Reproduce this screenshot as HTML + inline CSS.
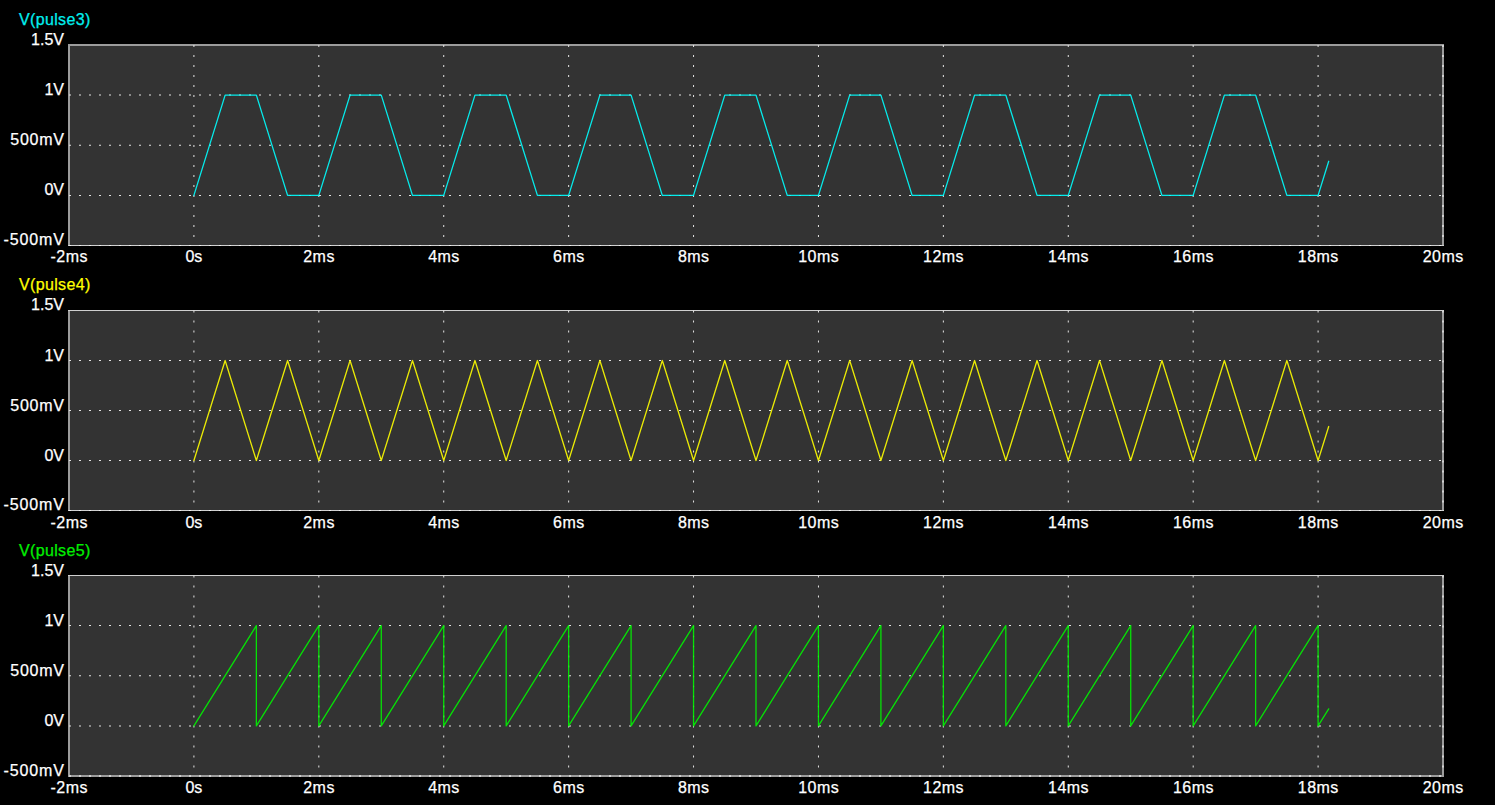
<!DOCTYPE html><html><head><meta charset="utf-8"><style>html,body{margin:0;padding:0;background:#000;width:1495px;height:805px;overflow:hidden}svg{display:block}text{font-family:"Liberation Sans",sans-serif;font-size:16px;stroke-width:0.25px;paint-order:stroke}</style></head><body>
<svg width="1495" height="805" viewBox="0 0 1495 805">
<rect x="0" y="0" width="1495" height="805" fill="#000"/>
<rect x="69.00" y="45.00" width="1374.00" height="200.50" fill="#333333"/>
<rect x="68.00" y="45.00" width="2" height="200.50" fill="#9c9c9c"/>
<rect x="1442.00" y="45.00" width="2" height="200.50" fill="#9c9c9c"/>
<rect x="68.00" y="44.00" width="1376.00" height="2" fill="#9c9c9c"/>
<rect x="68.00" y="245.00" width="1376.00" height="1" fill="#d0d0d0"/>
<path d="M69.00 94.62h2v1h-2zM79.00 94.62h2v1h-2zM89.00 94.62h2v1h-2zM99.00 94.62h2v1h-2zM109.00 94.62h2v1h-2zM119.00 94.62h2v1h-2zM129.00 94.62h2v1h-2zM139.00 94.62h2v1h-2zM149.00 94.62h2v1h-2zM159.00 94.62h2v1h-2zM169.00 94.62h2v1h-2zM179.00 94.62h2v1h-2zM189.00 94.62h2v1h-2zM199.00 94.62h2v1h-2zM209.00 94.62h2v1h-2zM219.00 94.62h2v1h-2zM229.00 94.62h2v1h-2zM239.00 94.62h2v1h-2zM249.00 94.62h2v1h-2zM259.00 94.62h2v1h-2zM269.00 94.62h2v1h-2zM279.00 94.62h2v1h-2zM289.00 94.62h2v1h-2zM299.00 94.62h2v1h-2zM309.00 94.62h2v1h-2zM319.00 94.62h2v1h-2zM329.00 94.62h2v1h-2zM339.00 94.62h2v1h-2zM349.00 94.62h2v1h-2zM359.00 94.62h2v1h-2zM369.00 94.62h2v1h-2zM379.00 94.62h2v1h-2zM389.00 94.62h2v1h-2zM399.00 94.62h2v1h-2zM409.00 94.62h2v1h-2zM419.00 94.62h2v1h-2zM429.00 94.62h2v1h-2zM439.00 94.62h2v1h-2zM449.00 94.62h2v1h-2zM459.00 94.62h2v1h-2zM469.00 94.62h2v1h-2zM479.00 94.62h2v1h-2zM489.00 94.62h2v1h-2zM499.00 94.62h2v1h-2zM509.00 94.62h2v1h-2zM519.00 94.62h2v1h-2zM529.00 94.62h2v1h-2zM539.00 94.62h2v1h-2zM549.00 94.62h2v1h-2zM559.00 94.62h2v1h-2zM569.00 94.62h2v1h-2zM579.00 94.62h2v1h-2zM589.00 94.62h2v1h-2zM599.00 94.62h2v1h-2zM609.00 94.62h2v1h-2zM619.00 94.62h2v1h-2zM629.00 94.62h2v1h-2zM639.00 94.62h2v1h-2zM649.00 94.62h2v1h-2zM659.00 94.62h2v1h-2zM669.00 94.62h2v1h-2zM679.00 94.62h2v1h-2zM689.00 94.62h2v1h-2zM699.00 94.62h2v1h-2zM709.00 94.62h2v1h-2zM719.00 94.62h2v1h-2zM729.00 94.62h2v1h-2zM739.00 94.62h2v1h-2zM749.00 94.62h2v1h-2zM759.00 94.62h2v1h-2zM769.00 94.62h2v1h-2zM779.00 94.62h2v1h-2zM789.00 94.62h2v1h-2zM799.00 94.62h2v1h-2zM809.00 94.62h2v1h-2zM819.00 94.62h2v1h-2zM829.00 94.62h2v1h-2zM839.00 94.62h2v1h-2zM849.00 94.62h2v1h-2zM859.00 94.62h2v1h-2zM869.00 94.62h2v1h-2zM879.00 94.62h2v1h-2zM889.00 94.62h2v1h-2zM899.00 94.62h2v1h-2zM909.00 94.62h2v1h-2zM919.00 94.62h2v1h-2zM929.00 94.62h2v1h-2zM939.00 94.62h2v1h-2zM949.00 94.62h2v1h-2zM959.00 94.62h2v1h-2zM969.00 94.62h2v1h-2zM979.00 94.62h2v1h-2zM989.00 94.62h2v1h-2zM999.00 94.62h2v1h-2zM1009.00 94.62h2v1h-2zM1019.00 94.62h2v1h-2zM1029.00 94.62h2v1h-2zM1039.00 94.62h2v1h-2zM1049.00 94.62h2v1h-2zM1059.00 94.62h2v1h-2zM1069.00 94.62h2v1h-2zM1079.00 94.62h2v1h-2zM1089.00 94.62h2v1h-2zM1099.00 94.62h2v1h-2zM1109.00 94.62h2v1h-2zM1119.00 94.62h2v1h-2zM1129.00 94.62h2v1h-2zM1139.00 94.62h2v1h-2zM1149.00 94.62h2v1h-2zM1159.00 94.62h2v1h-2zM1169.00 94.62h2v1h-2zM1179.00 94.62h2v1h-2zM1189.00 94.62h2v1h-2zM1199.00 94.62h2v1h-2zM1209.00 94.62h2v1h-2zM1219.00 94.62h2v1h-2zM1229.00 94.62h2v1h-2zM1239.00 94.62h2v1h-2zM1249.00 94.62h2v1h-2zM1259.00 94.62h2v1h-2zM1269.00 94.62h2v1h-2zM1279.00 94.62h2v1h-2zM1289.00 94.62h2v1h-2zM1299.00 94.62h2v1h-2zM1309.00 94.62h2v1h-2zM1319.00 94.62h2v1h-2zM1329.00 94.62h2v1h-2zM1339.00 94.62h2v1h-2zM1349.00 94.62h2v1h-2zM1359.00 94.62h2v1h-2zM1369.00 94.62h2v1h-2zM1379.00 94.62h2v1h-2zM1389.00 94.62h2v1h-2zM1399.00 94.62h2v1h-2zM1409.00 94.62h2v1h-2zM1419.00 94.62h2v1h-2zM1429.00 94.62h2v1h-2zM1439.00 94.62h2v1h-2zM69.00 144.75h2v1h-2zM79.00 144.75h2v1h-2zM89.00 144.75h2v1h-2zM99.00 144.75h2v1h-2zM109.00 144.75h2v1h-2zM119.00 144.75h2v1h-2zM129.00 144.75h2v1h-2zM139.00 144.75h2v1h-2zM149.00 144.75h2v1h-2zM159.00 144.75h2v1h-2zM169.00 144.75h2v1h-2zM179.00 144.75h2v1h-2zM189.00 144.75h2v1h-2zM199.00 144.75h2v1h-2zM209.00 144.75h2v1h-2zM219.00 144.75h2v1h-2zM229.00 144.75h2v1h-2zM239.00 144.75h2v1h-2zM249.00 144.75h2v1h-2zM259.00 144.75h2v1h-2zM269.00 144.75h2v1h-2zM279.00 144.75h2v1h-2zM289.00 144.75h2v1h-2zM299.00 144.75h2v1h-2zM309.00 144.75h2v1h-2zM319.00 144.75h2v1h-2zM329.00 144.75h2v1h-2zM339.00 144.75h2v1h-2zM349.00 144.75h2v1h-2zM359.00 144.75h2v1h-2zM369.00 144.75h2v1h-2zM379.00 144.75h2v1h-2zM389.00 144.75h2v1h-2zM399.00 144.75h2v1h-2zM409.00 144.75h2v1h-2zM419.00 144.75h2v1h-2zM429.00 144.75h2v1h-2zM439.00 144.75h2v1h-2zM449.00 144.75h2v1h-2zM459.00 144.75h2v1h-2zM469.00 144.75h2v1h-2zM479.00 144.75h2v1h-2zM489.00 144.75h2v1h-2zM499.00 144.75h2v1h-2zM509.00 144.75h2v1h-2zM519.00 144.75h2v1h-2zM529.00 144.75h2v1h-2zM539.00 144.75h2v1h-2zM549.00 144.75h2v1h-2zM559.00 144.75h2v1h-2zM569.00 144.75h2v1h-2zM579.00 144.75h2v1h-2zM589.00 144.75h2v1h-2zM599.00 144.75h2v1h-2zM609.00 144.75h2v1h-2zM619.00 144.75h2v1h-2zM629.00 144.75h2v1h-2zM639.00 144.75h2v1h-2zM649.00 144.75h2v1h-2zM659.00 144.75h2v1h-2zM669.00 144.75h2v1h-2zM679.00 144.75h2v1h-2zM689.00 144.75h2v1h-2zM699.00 144.75h2v1h-2zM709.00 144.75h2v1h-2zM719.00 144.75h2v1h-2zM729.00 144.75h2v1h-2zM739.00 144.75h2v1h-2zM749.00 144.75h2v1h-2zM759.00 144.75h2v1h-2zM769.00 144.75h2v1h-2zM779.00 144.75h2v1h-2zM789.00 144.75h2v1h-2zM799.00 144.75h2v1h-2zM809.00 144.75h2v1h-2zM819.00 144.75h2v1h-2zM829.00 144.75h2v1h-2zM839.00 144.75h2v1h-2zM849.00 144.75h2v1h-2zM859.00 144.75h2v1h-2zM869.00 144.75h2v1h-2zM879.00 144.75h2v1h-2zM889.00 144.75h2v1h-2zM899.00 144.75h2v1h-2zM909.00 144.75h2v1h-2zM919.00 144.75h2v1h-2zM929.00 144.75h2v1h-2zM939.00 144.75h2v1h-2zM949.00 144.75h2v1h-2zM959.00 144.75h2v1h-2zM969.00 144.75h2v1h-2zM979.00 144.75h2v1h-2zM989.00 144.75h2v1h-2zM999.00 144.75h2v1h-2zM1009.00 144.75h2v1h-2zM1019.00 144.75h2v1h-2zM1029.00 144.75h2v1h-2zM1039.00 144.75h2v1h-2zM1049.00 144.75h2v1h-2zM1059.00 144.75h2v1h-2zM1069.00 144.75h2v1h-2zM1079.00 144.75h2v1h-2zM1089.00 144.75h2v1h-2zM1099.00 144.75h2v1h-2zM1109.00 144.75h2v1h-2zM1119.00 144.75h2v1h-2zM1129.00 144.75h2v1h-2zM1139.00 144.75h2v1h-2zM1149.00 144.75h2v1h-2zM1159.00 144.75h2v1h-2zM1169.00 144.75h2v1h-2zM1179.00 144.75h2v1h-2zM1189.00 144.75h2v1h-2zM1199.00 144.75h2v1h-2zM1209.00 144.75h2v1h-2zM1219.00 144.75h2v1h-2zM1229.00 144.75h2v1h-2zM1239.00 144.75h2v1h-2zM1249.00 144.75h2v1h-2zM1259.00 144.75h2v1h-2zM1269.00 144.75h2v1h-2zM1279.00 144.75h2v1h-2zM1289.00 144.75h2v1h-2zM1299.00 144.75h2v1h-2zM1309.00 144.75h2v1h-2zM1319.00 144.75h2v1h-2zM1329.00 144.75h2v1h-2zM1339.00 144.75h2v1h-2zM1349.00 144.75h2v1h-2zM1359.00 144.75h2v1h-2zM1369.00 144.75h2v1h-2zM1379.00 144.75h2v1h-2zM1389.00 144.75h2v1h-2zM1399.00 144.75h2v1h-2zM1409.00 144.75h2v1h-2zM1419.00 144.75h2v1h-2zM1429.00 144.75h2v1h-2zM1439.00 144.75h2v1h-2zM69.00 194.88h2v1h-2zM79.00 194.88h2v1h-2zM89.00 194.88h2v1h-2zM99.00 194.88h2v1h-2zM109.00 194.88h2v1h-2zM119.00 194.88h2v1h-2zM129.00 194.88h2v1h-2zM139.00 194.88h2v1h-2zM149.00 194.88h2v1h-2zM159.00 194.88h2v1h-2zM169.00 194.88h2v1h-2zM179.00 194.88h2v1h-2zM189.00 194.88h2v1h-2zM199.00 194.88h2v1h-2zM209.00 194.88h2v1h-2zM219.00 194.88h2v1h-2zM229.00 194.88h2v1h-2zM239.00 194.88h2v1h-2zM249.00 194.88h2v1h-2zM259.00 194.88h2v1h-2zM269.00 194.88h2v1h-2zM279.00 194.88h2v1h-2zM289.00 194.88h2v1h-2zM299.00 194.88h2v1h-2zM309.00 194.88h2v1h-2zM319.00 194.88h2v1h-2zM329.00 194.88h2v1h-2zM339.00 194.88h2v1h-2zM349.00 194.88h2v1h-2zM359.00 194.88h2v1h-2zM369.00 194.88h2v1h-2zM379.00 194.88h2v1h-2zM389.00 194.88h2v1h-2zM399.00 194.88h2v1h-2zM409.00 194.88h2v1h-2zM419.00 194.88h2v1h-2zM429.00 194.88h2v1h-2zM439.00 194.88h2v1h-2zM449.00 194.88h2v1h-2zM459.00 194.88h2v1h-2zM469.00 194.88h2v1h-2zM479.00 194.88h2v1h-2zM489.00 194.88h2v1h-2zM499.00 194.88h2v1h-2zM509.00 194.88h2v1h-2zM519.00 194.88h2v1h-2zM529.00 194.88h2v1h-2zM539.00 194.88h2v1h-2zM549.00 194.88h2v1h-2zM559.00 194.88h2v1h-2zM569.00 194.88h2v1h-2zM579.00 194.88h2v1h-2zM589.00 194.88h2v1h-2zM599.00 194.88h2v1h-2zM609.00 194.88h2v1h-2zM619.00 194.88h2v1h-2zM629.00 194.88h2v1h-2zM639.00 194.88h2v1h-2zM649.00 194.88h2v1h-2zM659.00 194.88h2v1h-2zM669.00 194.88h2v1h-2zM679.00 194.88h2v1h-2zM689.00 194.88h2v1h-2zM699.00 194.88h2v1h-2zM709.00 194.88h2v1h-2zM719.00 194.88h2v1h-2zM729.00 194.88h2v1h-2zM739.00 194.88h2v1h-2zM749.00 194.88h2v1h-2zM759.00 194.88h2v1h-2zM769.00 194.88h2v1h-2zM779.00 194.88h2v1h-2zM789.00 194.88h2v1h-2zM799.00 194.88h2v1h-2zM809.00 194.88h2v1h-2zM819.00 194.88h2v1h-2zM829.00 194.88h2v1h-2zM839.00 194.88h2v1h-2zM849.00 194.88h2v1h-2zM859.00 194.88h2v1h-2zM869.00 194.88h2v1h-2zM879.00 194.88h2v1h-2zM889.00 194.88h2v1h-2zM899.00 194.88h2v1h-2zM909.00 194.88h2v1h-2zM919.00 194.88h2v1h-2zM929.00 194.88h2v1h-2zM939.00 194.88h2v1h-2zM949.00 194.88h2v1h-2zM959.00 194.88h2v1h-2zM969.00 194.88h2v1h-2zM979.00 194.88h2v1h-2zM989.00 194.88h2v1h-2zM999.00 194.88h2v1h-2zM1009.00 194.88h2v1h-2zM1019.00 194.88h2v1h-2zM1029.00 194.88h2v1h-2zM1039.00 194.88h2v1h-2zM1049.00 194.88h2v1h-2zM1059.00 194.88h2v1h-2zM1069.00 194.88h2v1h-2zM1079.00 194.88h2v1h-2zM1089.00 194.88h2v1h-2zM1099.00 194.88h2v1h-2zM1109.00 194.88h2v1h-2zM1119.00 194.88h2v1h-2zM1129.00 194.88h2v1h-2zM1139.00 194.88h2v1h-2zM1149.00 194.88h2v1h-2zM1159.00 194.88h2v1h-2zM1169.00 194.88h2v1h-2zM1179.00 194.88h2v1h-2zM1189.00 194.88h2v1h-2zM1199.00 194.88h2v1h-2zM1209.00 194.88h2v1h-2zM1219.00 194.88h2v1h-2zM1229.00 194.88h2v1h-2zM1239.00 194.88h2v1h-2zM1249.00 194.88h2v1h-2zM1259.00 194.88h2v1h-2zM1269.00 194.88h2v1h-2zM1279.00 194.88h2v1h-2zM1289.00 194.88h2v1h-2zM1299.00 194.88h2v1h-2zM1309.00 194.88h2v1h-2zM1319.00 194.88h2v1h-2zM1329.00 194.88h2v1h-2zM1339.00 194.88h2v1h-2zM1349.00 194.88h2v1h-2zM1359.00 194.88h2v1h-2zM1369.00 194.88h2v1h-2zM1379.00 194.88h2v1h-2zM1389.00 194.88h2v1h-2zM1399.00 194.88h2v1h-2zM1409.00 194.88h2v1h-2zM1419.00 194.88h2v1h-2zM1429.00 194.88h2v1h-2zM1439.00 194.88h2v1h-2zM193.41 45.00h1v2h-1zM193.41 55.00h1v2h-1zM193.41 65.00h1v2h-1zM193.41 75.00h1v2h-1zM193.41 85.00h1v2h-1zM193.41 95.00h1v2h-1zM193.41 105.00h1v2h-1zM193.41 115.00h1v2h-1zM193.41 125.00h1v2h-1zM193.41 135.00h1v2h-1zM193.41 145.00h1v2h-1zM193.41 155.00h1v2h-1zM193.41 165.00h1v2h-1zM193.41 175.00h1v2h-1zM193.41 185.00h1v2h-1zM193.41 195.00h1v2h-1zM193.41 205.00h1v2h-1zM193.41 215.00h1v2h-1zM193.41 225.00h1v2h-1zM193.41 235.00h1v2h-1zM318.32 45.00h1v2h-1zM318.32 55.00h1v2h-1zM318.32 65.00h1v2h-1zM318.32 75.00h1v2h-1zM318.32 85.00h1v2h-1zM318.32 95.00h1v2h-1zM318.32 105.00h1v2h-1zM318.32 115.00h1v2h-1zM318.32 125.00h1v2h-1zM318.32 135.00h1v2h-1zM318.32 145.00h1v2h-1zM318.32 155.00h1v2h-1zM318.32 165.00h1v2h-1zM318.32 175.00h1v2h-1zM318.32 185.00h1v2h-1zM318.32 195.00h1v2h-1zM318.32 205.00h1v2h-1zM318.32 215.00h1v2h-1zM318.32 225.00h1v2h-1zM318.32 235.00h1v2h-1zM443.23 45.00h1v2h-1zM443.23 55.00h1v2h-1zM443.23 65.00h1v2h-1zM443.23 75.00h1v2h-1zM443.23 85.00h1v2h-1zM443.23 95.00h1v2h-1zM443.23 105.00h1v2h-1zM443.23 115.00h1v2h-1zM443.23 125.00h1v2h-1zM443.23 135.00h1v2h-1zM443.23 145.00h1v2h-1zM443.23 155.00h1v2h-1zM443.23 165.00h1v2h-1zM443.23 175.00h1v2h-1zM443.23 185.00h1v2h-1zM443.23 195.00h1v2h-1zM443.23 205.00h1v2h-1zM443.23 215.00h1v2h-1zM443.23 225.00h1v2h-1zM443.23 235.00h1v2h-1zM568.14 45.00h1v2h-1zM568.14 55.00h1v2h-1zM568.14 65.00h1v2h-1zM568.14 75.00h1v2h-1zM568.14 85.00h1v2h-1zM568.14 95.00h1v2h-1zM568.14 105.00h1v2h-1zM568.14 115.00h1v2h-1zM568.14 125.00h1v2h-1zM568.14 135.00h1v2h-1zM568.14 145.00h1v2h-1zM568.14 155.00h1v2h-1zM568.14 165.00h1v2h-1zM568.14 175.00h1v2h-1zM568.14 185.00h1v2h-1zM568.14 195.00h1v2h-1zM568.14 205.00h1v2h-1zM568.14 215.00h1v2h-1zM568.14 225.00h1v2h-1zM568.14 235.00h1v2h-1zM693.05 45.00h1v2h-1zM693.05 55.00h1v2h-1zM693.05 65.00h1v2h-1zM693.05 75.00h1v2h-1zM693.05 85.00h1v2h-1zM693.05 95.00h1v2h-1zM693.05 105.00h1v2h-1zM693.05 115.00h1v2h-1zM693.05 125.00h1v2h-1zM693.05 135.00h1v2h-1zM693.05 145.00h1v2h-1zM693.05 155.00h1v2h-1zM693.05 165.00h1v2h-1zM693.05 175.00h1v2h-1zM693.05 185.00h1v2h-1zM693.05 195.00h1v2h-1zM693.05 205.00h1v2h-1zM693.05 215.00h1v2h-1zM693.05 225.00h1v2h-1zM693.05 235.00h1v2h-1zM817.95 45.00h1v2h-1zM817.95 55.00h1v2h-1zM817.95 65.00h1v2h-1zM817.95 75.00h1v2h-1zM817.95 85.00h1v2h-1zM817.95 95.00h1v2h-1zM817.95 105.00h1v2h-1zM817.95 115.00h1v2h-1zM817.95 125.00h1v2h-1zM817.95 135.00h1v2h-1zM817.95 145.00h1v2h-1zM817.95 155.00h1v2h-1zM817.95 165.00h1v2h-1zM817.95 175.00h1v2h-1zM817.95 185.00h1v2h-1zM817.95 195.00h1v2h-1zM817.95 205.00h1v2h-1zM817.95 215.00h1v2h-1zM817.95 225.00h1v2h-1zM817.95 235.00h1v2h-1zM942.86 45.00h1v2h-1zM942.86 55.00h1v2h-1zM942.86 65.00h1v2h-1zM942.86 75.00h1v2h-1zM942.86 85.00h1v2h-1zM942.86 95.00h1v2h-1zM942.86 105.00h1v2h-1zM942.86 115.00h1v2h-1zM942.86 125.00h1v2h-1zM942.86 135.00h1v2h-1zM942.86 145.00h1v2h-1zM942.86 155.00h1v2h-1zM942.86 165.00h1v2h-1zM942.86 175.00h1v2h-1zM942.86 185.00h1v2h-1zM942.86 195.00h1v2h-1zM942.86 205.00h1v2h-1zM942.86 215.00h1v2h-1zM942.86 225.00h1v2h-1zM942.86 235.00h1v2h-1zM1067.77 45.00h1v2h-1zM1067.77 55.00h1v2h-1zM1067.77 65.00h1v2h-1zM1067.77 75.00h1v2h-1zM1067.77 85.00h1v2h-1zM1067.77 95.00h1v2h-1zM1067.77 105.00h1v2h-1zM1067.77 115.00h1v2h-1zM1067.77 125.00h1v2h-1zM1067.77 135.00h1v2h-1zM1067.77 145.00h1v2h-1zM1067.77 155.00h1v2h-1zM1067.77 165.00h1v2h-1zM1067.77 175.00h1v2h-1zM1067.77 185.00h1v2h-1zM1067.77 195.00h1v2h-1zM1067.77 205.00h1v2h-1zM1067.77 215.00h1v2h-1zM1067.77 225.00h1v2h-1zM1067.77 235.00h1v2h-1zM1192.68 45.00h1v2h-1zM1192.68 55.00h1v2h-1zM1192.68 65.00h1v2h-1zM1192.68 75.00h1v2h-1zM1192.68 85.00h1v2h-1zM1192.68 95.00h1v2h-1zM1192.68 105.00h1v2h-1zM1192.68 115.00h1v2h-1zM1192.68 125.00h1v2h-1zM1192.68 135.00h1v2h-1zM1192.68 145.00h1v2h-1zM1192.68 155.00h1v2h-1zM1192.68 165.00h1v2h-1zM1192.68 175.00h1v2h-1zM1192.68 185.00h1v2h-1zM1192.68 195.00h1v2h-1zM1192.68 205.00h1v2h-1zM1192.68 215.00h1v2h-1zM1192.68 225.00h1v2h-1zM1192.68 235.00h1v2h-1zM1317.59 45.00h1v2h-1zM1317.59 55.00h1v2h-1zM1317.59 65.00h1v2h-1zM1317.59 75.00h1v2h-1zM1317.59 85.00h1v2h-1zM1317.59 95.00h1v2h-1zM1317.59 105.00h1v2h-1zM1317.59 115.00h1v2h-1zM1317.59 125.00h1v2h-1zM1317.59 135.00h1v2h-1zM1317.59 145.00h1v2h-1zM1317.59 155.00h1v2h-1zM1317.59 165.00h1v2h-1zM1317.59 175.00h1v2h-1zM1317.59 185.00h1v2h-1zM1317.59 195.00h1v2h-1zM1317.59 205.00h1v2h-1zM1317.59 215.00h1v2h-1zM1317.59 225.00h1v2h-1zM1317.59 235.00h1v2h-1z" fill="#e4e4e4"/>
<path d="M69.00 245.00h2v1.00h-2zM79.00 245.00h2v1.00h-2zM89.00 245.00h2v1.00h-2zM99.00 245.00h2v1.00h-2zM109.00 245.00h2v1.00h-2zM119.00 245.00h2v1.00h-2zM129.00 245.00h2v1.00h-2zM139.00 245.00h2v1.00h-2zM149.00 245.00h2v1.00h-2zM159.00 245.00h2v1.00h-2zM169.00 245.00h2v1.00h-2zM179.00 245.00h2v1.00h-2zM189.00 245.00h2v1.00h-2zM199.00 245.00h2v1.00h-2zM209.00 245.00h2v1.00h-2zM219.00 245.00h2v1.00h-2zM229.00 245.00h2v1.00h-2zM239.00 245.00h2v1.00h-2zM249.00 245.00h2v1.00h-2zM259.00 245.00h2v1.00h-2zM269.00 245.00h2v1.00h-2zM279.00 245.00h2v1.00h-2zM289.00 245.00h2v1.00h-2zM299.00 245.00h2v1.00h-2zM309.00 245.00h2v1.00h-2zM319.00 245.00h2v1.00h-2zM329.00 245.00h2v1.00h-2zM339.00 245.00h2v1.00h-2zM349.00 245.00h2v1.00h-2zM359.00 245.00h2v1.00h-2zM369.00 245.00h2v1.00h-2zM379.00 245.00h2v1.00h-2zM389.00 245.00h2v1.00h-2zM399.00 245.00h2v1.00h-2zM409.00 245.00h2v1.00h-2zM419.00 245.00h2v1.00h-2zM429.00 245.00h2v1.00h-2zM439.00 245.00h2v1.00h-2zM449.00 245.00h2v1.00h-2zM459.00 245.00h2v1.00h-2zM469.00 245.00h2v1.00h-2zM479.00 245.00h2v1.00h-2zM489.00 245.00h2v1.00h-2zM499.00 245.00h2v1.00h-2zM509.00 245.00h2v1.00h-2zM519.00 245.00h2v1.00h-2zM529.00 245.00h2v1.00h-2zM539.00 245.00h2v1.00h-2zM549.00 245.00h2v1.00h-2zM559.00 245.00h2v1.00h-2zM569.00 245.00h2v1.00h-2zM579.00 245.00h2v1.00h-2zM589.00 245.00h2v1.00h-2zM599.00 245.00h2v1.00h-2zM609.00 245.00h2v1.00h-2zM619.00 245.00h2v1.00h-2zM629.00 245.00h2v1.00h-2zM639.00 245.00h2v1.00h-2zM649.00 245.00h2v1.00h-2zM659.00 245.00h2v1.00h-2zM669.00 245.00h2v1.00h-2zM679.00 245.00h2v1.00h-2zM689.00 245.00h2v1.00h-2zM699.00 245.00h2v1.00h-2zM709.00 245.00h2v1.00h-2zM719.00 245.00h2v1.00h-2zM729.00 245.00h2v1.00h-2zM739.00 245.00h2v1.00h-2zM749.00 245.00h2v1.00h-2zM759.00 245.00h2v1.00h-2zM769.00 245.00h2v1.00h-2zM779.00 245.00h2v1.00h-2zM789.00 245.00h2v1.00h-2zM799.00 245.00h2v1.00h-2zM809.00 245.00h2v1.00h-2zM819.00 245.00h2v1.00h-2zM829.00 245.00h2v1.00h-2zM839.00 245.00h2v1.00h-2zM849.00 245.00h2v1.00h-2zM859.00 245.00h2v1.00h-2zM869.00 245.00h2v1.00h-2zM879.00 245.00h2v1.00h-2zM889.00 245.00h2v1.00h-2zM899.00 245.00h2v1.00h-2zM909.00 245.00h2v1.00h-2zM919.00 245.00h2v1.00h-2zM929.00 245.00h2v1.00h-2zM939.00 245.00h2v1.00h-2zM949.00 245.00h2v1.00h-2zM959.00 245.00h2v1.00h-2zM969.00 245.00h2v1.00h-2zM979.00 245.00h2v1.00h-2zM989.00 245.00h2v1.00h-2zM999.00 245.00h2v1.00h-2zM1009.00 245.00h2v1.00h-2zM1019.00 245.00h2v1.00h-2zM1029.00 245.00h2v1.00h-2zM1039.00 245.00h2v1.00h-2zM1049.00 245.00h2v1.00h-2zM1059.00 245.00h2v1.00h-2zM1069.00 245.00h2v1.00h-2zM1079.00 245.00h2v1.00h-2zM1089.00 245.00h2v1.00h-2zM1099.00 245.00h2v1.00h-2zM1109.00 245.00h2v1.00h-2zM1119.00 245.00h2v1.00h-2zM1129.00 245.00h2v1.00h-2zM1139.00 245.00h2v1.00h-2zM1149.00 245.00h2v1.00h-2zM1159.00 245.00h2v1.00h-2zM1169.00 245.00h2v1.00h-2zM1179.00 245.00h2v1.00h-2zM1189.00 245.00h2v1.00h-2zM1199.00 245.00h2v1.00h-2zM1209.00 245.00h2v1.00h-2zM1219.00 245.00h2v1.00h-2zM1229.00 245.00h2v1.00h-2zM1239.00 245.00h2v1.00h-2zM1249.00 245.00h2v1.00h-2zM1259.00 245.00h2v1.00h-2zM1269.00 245.00h2v1.00h-2zM1279.00 245.00h2v1.00h-2zM1289.00 245.00h2v1.00h-2zM1299.00 245.00h2v1.00h-2zM1309.00 245.00h2v1.00h-2zM1319.00 245.00h2v1.00h-2zM1329.00 245.00h2v1.00h-2zM1339.00 245.00h2v1.00h-2zM1349.00 245.00h2v1.00h-2zM1359.00 245.00h2v1.00h-2zM1369.00 245.00h2v1.00h-2zM1379.00 245.00h2v1.00h-2zM1389.00 245.00h2v1.00h-2zM1399.00 245.00h2v1.00h-2zM1409.00 245.00h2v1.00h-2zM1419.00 245.00h2v1.00h-2zM1429.00 245.00h2v1.00h-2zM1439.00 245.00h2v1.00h-2z" fill="#eeeeee"/>
<path d="M1442.00 45.00h2.00v2h-2.00zM1442.00 55.00h2.00v2h-2.00zM1442.00 65.00h2.00v2h-2.00zM1442.00 75.00h2.00v2h-2.00zM1442.00 85.00h2.00v2h-2.00zM1442.00 95.00h2.00v2h-2.00zM1442.00 105.00h2.00v2h-2.00zM1442.00 115.00h2.00v2h-2.00zM1442.00 125.00h2.00v2h-2.00zM1442.00 135.00h2.00v2h-2.00zM1442.00 145.00h2.00v2h-2.00zM1442.00 155.00h2.00v2h-2.00zM1442.00 165.00h2.00v2h-2.00zM1442.00 175.00h2.00v2h-2.00zM1442.00 185.00h2.00v2h-2.00zM1442.00 195.00h2.00v2h-2.00zM1442.00 205.00h2.00v2h-2.00zM1442.00 215.00h2.00v2h-2.00zM1442.00 225.00h2.00v2h-2.00zM1442.00 235.00h2.00v2h-2.00z" fill="#d0d0d0"/>
<path d="M193.91 195.38 L225.14 95.12 L256.36 95.12 L287.59 195.38 L318.82 195.38 L350.05 95.12 L381.27 95.12 L412.50 195.38 L443.73 195.38 L474.95 95.12 L506.18 95.12 L537.41 195.38 L568.64 195.38 L599.86 95.12 L631.09 95.12 L662.32 195.38 L693.55 195.38 L724.77 95.12 L756.00 95.12 L787.23 195.38 L818.45 195.38 L849.68 95.12 L880.91 95.12 L912.14 195.38 L943.36 195.38 L974.59 95.12 L1005.82 95.12 L1037.05 195.38 L1068.27 195.38 L1099.50 95.12 L1130.73 95.12 L1161.95 195.38 L1193.18 195.38 L1224.41 95.12 L1255.64 95.12 L1286.86 195.38 L1318.09 195.38 L1328.71 161.29" fill="none" stroke="#00ffff" stroke-width="1.3" stroke-opacity="0.9" stroke-linejoin="round" stroke-linecap="round"/>
<text x="19" y="25" fill="#00f0f0" stroke="#00f0f0" letter-spacing="0.35">V(pulse3)</text>
<text x="64.00" y="45.00" fill="#ffffff" stroke="#ffffff" text-anchor="end" letter-spacing="0.00">1.5V</text>
<text x="64.00" y="95.12" fill="#ffffff" stroke="#ffffff" text-anchor="end" letter-spacing="0.00">1V</text>
<text x="64.75" y="145.25" fill="#ffffff" stroke="#ffffff" text-anchor="end" letter-spacing="0.75">500mV</text>
<text x="64.00" y="195.38" fill="#ffffff" stroke="#ffffff" text-anchor="end" letter-spacing="0.00">0V</text>
<text x="64.90" y="245.00" fill="#ffffff" stroke="#ffffff" text-anchor="end" letter-spacing="0.90">-500mV</text>
<text x="69.22" y="262" fill="#ffffff" stroke="#ffffff" text-anchor="middle" letter-spacing="0.45">-2ms</text>
<text x="193.91" y="262" fill="#ffffff" stroke="#ffffff" text-anchor="middle" letter-spacing="0.00">0s</text>
<text x="319.04" y="262" fill="#ffffff" stroke="#ffffff" text-anchor="middle" letter-spacing="0.45">2ms</text>
<text x="443.95" y="262" fill="#ffffff" stroke="#ffffff" text-anchor="middle" letter-spacing="0.45">4ms</text>
<text x="568.86" y="262" fill="#ffffff" stroke="#ffffff" text-anchor="middle" letter-spacing="0.45">6ms</text>
<text x="693.77" y="262" fill="#ffffff" stroke="#ffffff" text-anchor="middle" letter-spacing="0.45">8ms</text>
<text x="818.68" y="262" fill="#ffffff" stroke="#ffffff" text-anchor="middle" letter-spacing="0.45">10ms</text>
<text x="943.59" y="262" fill="#ffffff" stroke="#ffffff" text-anchor="middle" letter-spacing="0.45">12ms</text>
<text x="1068.50" y="262" fill="#ffffff" stroke="#ffffff" text-anchor="middle" letter-spacing="0.45">14ms</text>
<text x="1193.41" y="262" fill="#ffffff" stroke="#ffffff" text-anchor="middle" letter-spacing="0.45">16ms</text>
<text x="1318.32" y="262" fill="#ffffff" stroke="#ffffff" text-anchor="middle" letter-spacing="0.45">18ms</text>
<text x="1443.22" y="262" fill="#ffffff" stroke="#ffffff" text-anchor="middle" letter-spacing="0.45">20ms</text>
<rect x="69.00" y="310.50" width="1374.00" height="200.00" fill="#333333"/>
<rect x="68.00" y="310.50" width="2" height="200.00" fill="#9c9c9c"/>
<rect x="1442.00" y="310.50" width="2" height="200.00" fill="#9c9c9c"/>
<rect x="68.00" y="310.00" width="1376.00" height="1" fill="#d0d0d0"/>
<rect x="68.00" y="510.00" width="1376.00" height="1" fill="#d0d0d0"/>
<path d="M69.00 360.00h2v1h-2zM79.00 360.00h2v1h-2zM89.00 360.00h2v1h-2zM99.00 360.00h2v1h-2zM109.00 360.00h2v1h-2zM119.00 360.00h2v1h-2zM129.00 360.00h2v1h-2zM139.00 360.00h2v1h-2zM149.00 360.00h2v1h-2zM159.00 360.00h2v1h-2zM169.00 360.00h2v1h-2zM179.00 360.00h2v1h-2zM189.00 360.00h2v1h-2zM199.00 360.00h2v1h-2zM209.00 360.00h2v1h-2zM219.00 360.00h2v1h-2zM229.00 360.00h2v1h-2zM239.00 360.00h2v1h-2zM249.00 360.00h2v1h-2zM259.00 360.00h2v1h-2zM269.00 360.00h2v1h-2zM279.00 360.00h2v1h-2zM289.00 360.00h2v1h-2zM299.00 360.00h2v1h-2zM309.00 360.00h2v1h-2zM319.00 360.00h2v1h-2zM329.00 360.00h2v1h-2zM339.00 360.00h2v1h-2zM349.00 360.00h2v1h-2zM359.00 360.00h2v1h-2zM369.00 360.00h2v1h-2zM379.00 360.00h2v1h-2zM389.00 360.00h2v1h-2zM399.00 360.00h2v1h-2zM409.00 360.00h2v1h-2zM419.00 360.00h2v1h-2zM429.00 360.00h2v1h-2zM439.00 360.00h2v1h-2zM449.00 360.00h2v1h-2zM459.00 360.00h2v1h-2zM469.00 360.00h2v1h-2zM479.00 360.00h2v1h-2zM489.00 360.00h2v1h-2zM499.00 360.00h2v1h-2zM509.00 360.00h2v1h-2zM519.00 360.00h2v1h-2zM529.00 360.00h2v1h-2zM539.00 360.00h2v1h-2zM549.00 360.00h2v1h-2zM559.00 360.00h2v1h-2zM569.00 360.00h2v1h-2zM579.00 360.00h2v1h-2zM589.00 360.00h2v1h-2zM599.00 360.00h2v1h-2zM609.00 360.00h2v1h-2zM619.00 360.00h2v1h-2zM629.00 360.00h2v1h-2zM639.00 360.00h2v1h-2zM649.00 360.00h2v1h-2zM659.00 360.00h2v1h-2zM669.00 360.00h2v1h-2zM679.00 360.00h2v1h-2zM689.00 360.00h2v1h-2zM699.00 360.00h2v1h-2zM709.00 360.00h2v1h-2zM719.00 360.00h2v1h-2zM729.00 360.00h2v1h-2zM739.00 360.00h2v1h-2zM749.00 360.00h2v1h-2zM759.00 360.00h2v1h-2zM769.00 360.00h2v1h-2zM779.00 360.00h2v1h-2zM789.00 360.00h2v1h-2zM799.00 360.00h2v1h-2zM809.00 360.00h2v1h-2zM819.00 360.00h2v1h-2zM829.00 360.00h2v1h-2zM839.00 360.00h2v1h-2zM849.00 360.00h2v1h-2zM859.00 360.00h2v1h-2zM869.00 360.00h2v1h-2zM879.00 360.00h2v1h-2zM889.00 360.00h2v1h-2zM899.00 360.00h2v1h-2zM909.00 360.00h2v1h-2zM919.00 360.00h2v1h-2zM929.00 360.00h2v1h-2zM939.00 360.00h2v1h-2zM949.00 360.00h2v1h-2zM959.00 360.00h2v1h-2zM969.00 360.00h2v1h-2zM979.00 360.00h2v1h-2zM989.00 360.00h2v1h-2zM999.00 360.00h2v1h-2zM1009.00 360.00h2v1h-2zM1019.00 360.00h2v1h-2zM1029.00 360.00h2v1h-2zM1039.00 360.00h2v1h-2zM1049.00 360.00h2v1h-2zM1059.00 360.00h2v1h-2zM1069.00 360.00h2v1h-2zM1079.00 360.00h2v1h-2zM1089.00 360.00h2v1h-2zM1099.00 360.00h2v1h-2zM1109.00 360.00h2v1h-2zM1119.00 360.00h2v1h-2zM1129.00 360.00h2v1h-2zM1139.00 360.00h2v1h-2zM1149.00 360.00h2v1h-2zM1159.00 360.00h2v1h-2zM1169.00 360.00h2v1h-2zM1179.00 360.00h2v1h-2zM1189.00 360.00h2v1h-2zM1199.00 360.00h2v1h-2zM1209.00 360.00h2v1h-2zM1219.00 360.00h2v1h-2zM1229.00 360.00h2v1h-2zM1239.00 360.00h2v1h-2zM1249.00 360.00h2v1h-2zM1259.00 360.00h2v1h-2zM1269.00 360.00h2v1h-2zM1279.00 360.00h2v1h-2zM1289.00 360.00h2v1h-2zM1299.00 360.00h2v1h-2zM1309.00 360.00h2v1h-2zM1319.00 360.00h2v1h-2zM1329.00 360.00h2v1h-2zM1339.00 360.00h2v1h-2zM1349.00 360.00h2v1h-2zM1359.00 360.00h2v1h-2zM1369.00 360.00h2v1h-2zM1379.00 360.00h2v1h-2zM1389.00 360.00h2v1h-2zM1399.00 360.00h2v1h-2zM1409.00 360.00h2v1h-2zM1419.00 360.00h2v1h-2zM1429.00 360.00h2v1h-2zM1439.00 360.00h2v1h-2zM69.00 410.00h2v1h-2zM79.00 410.00h2v1h-2zM89.00 410.00h2v1h-2zM99.00 410.00h2v1h-2zM109.00 410.00h2v1h-2zM119.00 410.00h2v1h-2zM129.00 410.00h2v1h-2zM139.00 410.00h2v1h-2zM149.00 410.00h2v1h-2zM159.00 410.00h2v1h-2zM169.00 410.00h2v1h-2zM179.00 410.00h2v1h-2zM189.00 410.00h2v1h-2zM199.00 410.00h2v1h-2zM209.00 410.00h2v1h-2zM219.00 410.00h2v1h-2zM229.00 410.00h2v1h-2zM239.00 410.00h2v1h-2zM249.00 410.00h2v1h-2zM259.00 410.00h2v1h-2zM269.00 410.00h2v1h-2zM279.00 410.00h2v1h-2zM289.00 410.00h2v1h-2zM299.00 410.00h2v1h-2zM309.00 410.00h2v1h-2zM319.00 410.00h2v1h-2zM329.00 410.00h2v1h-2zM339.00 410.00h2v1h-2zM349.00 410.00h2v1h-2zM359.00 410.00h2v1h-2zM369.00 410.00h2v1h-2zM379.00 410.00h2v1h-2zM389.00 410.00h2v1h-2zM399.00 410.00h2v1h-2zM409.00 410.00h2v1h-2zM419.00 410.00h2v1h-2zM429.00 410.00h2v1h-2zM439.00 410.00h2v1h-2zM449.00 410.00h2v1h-2zM459.00 410.00h2v1h-2zM469.00 410.00h2v1h-2zM479.00 410.00h2v1h-2zM489.00 410.00h2v1h-2zM499.00 410.00h2v1h-2zM509.00 410.00h2v1h-2zM519.00 410.00h2v1h-2zM529.00 410.00h2v1h-2zM539.00 410.00h2v1h-2zM549.00 410.00h2v1h-2zM559.00 410.00h2v1h-2zM569.00 410.00h2v1h-2zM579.00 410.00h2v1h-2zM589.00 410.00h2v1h-2zM599.00 410.00h2v1h-2zM609.00 410.00h2v1h-2zM619.00 410.00h2v1h-2zM629.00 410.00h2v1h-2zM639.00 410.00h2v1h-2zM649.00 410.00h2v1h-2zM659.00 410.00h2v1h-2zM669.00 410.00h2v1h-2zM679.00 410.00h2v1h-2zM689.00 410.00h2v1h-2zM699.00 410.00h2v1h-2zM709.00 410.00h2v1h-2zM719.00 410.00h2v1h-2zM729.00 410.00h2v1h-2zM739.00 410.00h2v1h-2zM749.00 410.00h2v1h-2zM759.00 410.00h2v1h-2zM769.00 410.00h2v1h-2zM779.00 410.00h2v1h-2zM789.00 410.00h2v1h-2zM799.00 410.00h2v1h-2zM809.00 410.00h2v1h-2zM819.00 410.00h2v1h-2zM829.00 410.00h2v1h-2zM839.00 410.00h2v1h-2zM849.00 410.00h2v1h-2zM859.00 410.00h2v1h-2zM869.00 410.00h2v1h-2zM879.00 410.00h2v1h-2zM889.00 410.00h2v1h-2zM899.00 410.00h2v1h-2zM909.00 410.00h2v1h-2zM919.00 410.00h2v1h-2zM929.00 410.00h2v1h-2zM939.00 410.00h2v1h-2zM949.00 410.00h2v1h-2zM959.00 410.00h2v1h-2zM969.00 410.00h2v1h-2zM979.00 410.00h2v1h-2zM989.00 410.00h2v1h-2zM999.00 410.00h2v1h-2zM1009.00 410.00h2v1h-2zM1019.00 410.00h2v1h-2zM1029.00 410.00h2v1h-2zM1039.00 410.00h2v1h-2zM1049.00 410.00h2v1h-2zM1059.00 410.00h2v1h-2zM1069.00 410.00h2v1h-2zM1079.00 410.00h2v1h-2zM1089.00 410.00h2v1h-2zM1099.00 410.00h2v1h-2zM1109.00 410.00h2v1h-2zM1119.00 410.00h2v1h-2zM1129.00 410.00h2v1h-2zM1139.00 410.00h2v1h-2zM1149.00 410.00h2v1h-2zM1159.00 410.00h2v1h-2zM1169.00 410.00h2v1h-2zM1179.00 410.00h2v1h-2zM1189.00 410.00h2v1h-2zM1199.00 410.00h2v1h-2zM1209.00 410.00h2v1h-2zM1219.00 410.00h2v1h-2zM1229.00 410.00h2v1h-2zM1239.00 410.00h2v1h-2zM1249.00 410.00h2v1h-2zM1259.00 410.00h2v1h-2zM1269.00 410.00h2v1h-2zM1279.00 410.00h2v1h-2zM1289.00 410.00h2v1h-2zM1299.00 410.00h2v1h-2zM1309.00 410.00h2v1h-2zM1319.00 410.00h2v1h-2zM1329.00 410.00h2v1h-2zM1339.00 410.00h2v1h-2zM1349.00 410.00h2v1h-2zM1359.00 410.00h2v1h-2zM1369.00 410.00h2v1h-2zM1379.00 410.00h2v1h-2zM1389.00 410.00h2v1h-2zM1399.00 410.00h2v1h-2zM1409.00 410.00h2v1h-2zM1419.00 410.00h2v1h-2zM1429.00 410.00h2v1h-2zM1439.00 410.00h2v1h-2zM69.00 460.00h2v1h-2zM79.00 460.00h2v1h-2zM89.00 460.00h2v1h-2zM99.00 460.00h2v1h-2zM109.00 460.00h2v1h-2zM119.00 460.00h2v1h-2zM129.00 460.00h2v1h-2zM139.00 460.00h2v1h-2zM149.00 460.00h2v1h-2zM159.00 460.00h2v1h-2zM169.00 460.00h2v1h-2zM179.00 460.00h2v1h-2zM189.00 460.00h2v1h-2zM199.00 460.00h2v1h-2zM209.00 460.00h2v1h-2zM219.00 460.00h2v1h-2zM229.00 460.00h2v1h-2zM239.00 460.00h2v1h-2zM249.00 460.00h2v1h-2zM259.00 460.00h2v1h-2zM269.00 460.00h2v1h-2zM279.00 460.00h2v1h-2zM289.00 460.00h2v1h-2zM299.00 460.00h2v1h-2zM309.00 460.00h2v1h-2zM319.00 460.00h2v1h-2zM329.00 460.00h2v1h-2zM339.00 460.00h2v1h-2zM349.00 460.00h2v1h-2zM359.00 460.00h2v1h-2zM369.00 460.00h2v1h-2zM379.00 460.00h2v1h-2zM389.00 460.00h2v1h-2zM399.00 460.00h2v1h-2zM409.00 460.00h2v1h-2zM419.00 460.00h2v1h-2zM429.00 460.00h2v1h-2zM439.00 460.00h2v1h-2zM449.00 460.00h2v1h-2zM459.00 460.00h2v1h-2zM469.00 460.00h2v1h-2zM479.00 460.00h2v1h-2zM489.00 460.00h2v1h-2zM499.00 460.00h2v1h-2zM509.00 460.00h2v1h-2zM519.00 460.00h2v1h-2zM529.00 460.00h2v1h-2zM539.00 460.00h2v1h-2zM549.00 460.00h2v1h-2zM559.00 460.00h2v1h-2zM569.00 460.00h2v1h-2zM579.00 460.00h2v1h-2zM589.00 460.00h2v1h-2zM599.00 460.00h2v1h-2zM609.00 460.00h2v1h-2zM619.00 460.00h2v1h-2zM629.00 460.00h2v1h-2zM639.00 460.00h2v1h-2zM649.00 460.00h2v1h-2zM659.00 460.00h2v1h-2zM669.00 460.00h2v1h-2zM679.00 460.00h2v1h-2zM689.00 460.00h2v1h-2zM699.00 460.00h2v1h-2zM709.00 460.00h2v1h-2zM719.00 460.00h2v1h-2zM729.00 460.00h2v1h-2zM739.00 460.00h2v1h-2zM749.00 460.00h2v1h-2zM759.00 460.00h2v1h-2zM769.00 460.00h2v1h-2zM779.00 460.00h2v1h-2zM789.00 460.00h2v1h-2zM799.00 460.00h2v1h-2zM809.00 460.00h2v1h-2zM819.00 460.00h2v1h-2zM829.00 460.00h2v1h-2zM839.00 460.00h2v1h-2zM849.00 460.00h2v1h-2zM859.00 460.00h2v1h-2zM869.00 460.00h2v1h-2zM879.00 460.00h2v1h-2zM889.00 460.00h2v1h-2zM899.00 460.00h2v1h-2zM909.00 460.00h2v1h-2zM919.00 460.00h2v1h-2zM929.00 460.00h2v1h-2zM939.00 460.00h2v1h-2zM949.00 460.00h2v1h-2zM959.00 460.00h2v1h-2zM969.00 460.00h2v1h-2zM979.00 460.00h2v1h-2zM989.00 460.00h2v1h-2zM999.00 460.00h2v1h-2zM1009.00 460.00h2v1h-2zM1019.00 460.00h2v1h-2zM1029.00 460.00h2v1h-2zM1039.00 460.00h2v1h-2zM1049.00 460.00h2v1h-2zM1059.00 460.00h2v1h-2zM1069.00 460.00h2v1h-2zM1079.00 460.00h2v1h-2zM1089.00 460.00h2v1h-2zM1099.00 460.00h2v1h-2zM1109.00 460.00h2v1h-2zM1119.00 460.00h2v1h-2zM1129.00 460.00h2v1h-2zM1139.00 460.00h2v1h-2zM1149.00 460.00h2v1h-2zM1159.00 460.00h2v1h-2zM1169.00 460.00h2v1h-2zM1179.00 460.00h2v1h-2zM1189.00 460.00h2v1h-2zM1199.00 460.00h2v1h-2zM1209.00 460.00h2v1h-2zM1219.00 460.00h2v1h-2zM1229.00 460.00h2v1h-2zM1239.00 460.00h2v1h-2zM1249.00 460.00h2v1h-2zM1259.00 460.00h2v1h-2zM1269.00 460.00h2v1h-2zM1279.00 460.00h2v1h-2zM1289.00 460.00h2v1h-2zM1299.00 460.00h2v1h-2zM1309.00 460.00h2v1h-2zM1319.00 460.00h2v1h-2zM1329.00 460.00h2v1h-2zM1339.00 460.00h2v1h-2zM1349.00 460.00h2v1h-2zM1359.00 460.00h2v1h-2zM1369.00 460.00h2v1h-2zM1379.00 460.00h2v1h-2zM1389.00 460.00h2v1h-2zM1399.00 460.00h2v1h-2zM1409.00 460.00h2v1h-2zM1419.00 460.00h2v1h-2zM1429.00 460.00h2v1h-2zM1439.00 460.00h2v1h-2zM193.41 310.50h1v2h-1zM193.41 320.50h1v2h-1zM193.41 330.50h1v2h-1zM193.41 340.50h1v2h-1zM193.41 350.50h1v2h-1zM193.41 360.50h1v2h-1zM193.41 370.50h1v2h-1zM193.41 380.50h1v2h-1zM193.41 390.50h1v2h-1zM193.41 400.50h1v2h-1zM193.41 410.50h1v2h-1zM193.41 420.50h1v2h-1zM193.41 430.50h1v2h-1zM193.41 440.50h1v2h-1zM193.41 450.50h1v2h-1zM193.41 460.50h1v2h-1zM193.41 470.50h1v2h-1zM193.41 480.50h1v2h-1zM193.41 490.50h1v2h-1zM193.41 500.50h1v2h-1zM318.32 310.50h1v2h-1zM318.32 320.50h1v2h-1zM318.32 330.50h1v2h-1zM318.32 340.50h1v2h-1zM318.32 350.50h1v2h-1zM318.32 360.50h1v2h-1zM318.32 370.50h1v2h-1zM318.32 380.50h1v2h-1zM318.32 390.50h1v2h-1zM318.32 400.50h1v2h-1zM318.32 410.50h1v2h-1zM318.32 420.50h1v2h-1zM318.32 430.50h1v2h-1zM318.32 440.50h1v2h-1zM318.32 450.50h1v2h-1zM318.32 460.50h1v2h-1zM318.32 470.50h1v2h-1zM318.32 480.50h1v2h-1zM318.32 490.50h1v2h-1zM318.32 500.50h1v2h-1zM443.23 310.50h1v2h-1zM443.23 320.50h1v2h-1zM443.23 330.50h1v2h-1zM443.23 340.50h1v2h-1zM443.23 350.50h1v2h-1zM443.23 360.50h1v2h-1zM443.23 370.50h1v2h-1zM443.23 380.50h1v2h-1zM443.23 390.50h1v2h-1zM443.23 400.50h1v2h-1zM443.23 410.50h1v2h-1zM443.23 420.50h1v2h-1zM443.23 430.50h1v2h-1zM443.23 440.50h1v2h-1zM443.23 450.50h1v2h-1zM443.23 460.50h1v2h-1zM443.23 470.50h1v2h-1zM443.23 480.50h1v2h-1zM443.23 490.50h1v2h-1zM443.23 500.50h1v2h-1zM568.14 310.50h1v2h-1zM568.14 320.50h1v2h-1zM568.14 330.50h1v2h-1zM568.14 340.50h1v2h-1zM568.14 350.50h1v2h-1zM568.14 360.50h1v2h-1zM568.14 370.50h1v2h-1zM568.14 380.50h1v2h-1zM568.14 390.50h1v2h-1zM568.14 400.50h1v2h-1zM568.14 410.50h1v2h-1zM568.14 420.50h1v2h-1zM568.14 430.50h1v2h-1zM568.14 440.50h1v2h-1zM568.14 450.50h1v2h-1zM568.14 460.50h1v2h-1zM568.14 470.50h1v2h-1zM568.14 480.50h1v2h-1zM568.14 490.50h1v2h-1zM568.14 500.50h1v2h-1zM693.05 310.50h1v2h-1zM693.05 320.50h1v2h-1zM693.05 330.50h1v2h-1zM693.05 340.50h1v2h-1zM693.05 350.50h1v2h-1zM693.05 360.50h1v2h-1zM693.05 370.50h1v2h-1zM693.05 380.50h1v2h-1zM693.05 390.50h1v2h-1zM693.05 400.50h1v2h-1zM693.05 410.50h1v2h-1zM693.05 420.50h1v2h-1zM693.05 430.50h1v2h-1zM693.05 440.50h1v2h-1zM693.05 450.50h1v2h-1zM693.05 460.50h1v2h-1zM693.05 470.50h1v2h-1zM693.05 480.50h1v2h-1zM693.05 490.50h1v2h-1zM693.05 500.50h1v2h-1zM817.95 310.50h1v2h-1zM817.95 320.50h1v2h-1zM817.95 330.50h1v2h-1zM817.95 340.50h1v2h-1zM817.95 350.50h1v2h-1zM817.95 360.50h1v2h-1zM817.95 370.50h1v2h-1zM817.95 380.50h1v2h-1zM817.95 390.50h1v2h-1zM817.95 400.50h1v2h-1zM817.95 410.50h1v2h-1zM817.95 420.50h1v2h-1zM817.95 430.50h1v2h-1zM817.95 440.50h1v2h-1zM817.95 450.50h1v2h-1zM817.95 460.50h1v2h-1zM817.95 470.50h1v2h-1zM817.95 480.50h1v2h-1zM817.95 490.50h1v2h-1zM817.95 500.50h1v2h-1zM942.86 310.50h1v2h-1zM942.86 320.50h1v2h-1zM942.86 330.50h1v2h-1zM942.86 340.50h1v2h-1zM942.86 350.50h1v2h-1zM942.86 360.50h1v2h-1zM942.86 370.50h1v2h-1zM942.86 380.50h1v2h-1zM942.86 390.50h1v2h-1zM942.86 400.50h1v2h-1zM942.86 410.50h1v2h-1zM942.86 420.50h1v2h-1zM942.86 430.50h1v2h-1zM942.86 440.50h1v2h-1zM942.86 450.50h1v2h-1zM942.86 460.50h1v2h-1zM942.86 470.50h1v2h-1zM942.86 480.50h1v2h-1zM942.86 490.50h1v2h-1zM942.86 500.50h1v2h-1zM1067.77 310.50h1v2h-1zM1067.77 320.50h1v2h-1zM1067.77 330.50h1v2h-1zM1067.77 340.50h1v2h-1zM1067.77 350.50h1v2h-1zM1067.77 360.50h1v2h-1zM1067.77 370.50h1v2h-1zM1067.77 380.50h1v2h-1zM1067.77 390.50h1v2h-1zM1067.77 400.50h1v2h-1zM1067.77 410.50h1v2h-1zM1067.77 420.50h1v2h-1zM1067.77 430.50h1v2h-1zM1067.77 440.50h1v2h-1zM1067.77 450.50h1v2h-1zM1067.77 460.50h1v2h-1zM1067.77 470.50h1v2h-1zM1067.77 480.50h1v2h-1zM1067.77 490.50h1v2h-1zM1067.77 500.50h1v2h-1zM1192.68 310.50h1v2h-1zM1192.68 320.50h1v2h-1zM1192.68 330.50h1v2h-1zM1192.68 340.50h1v2h-1zM1192.68 350.50h1v2h-1zM1192.68 360.50h1v2h-1zM1192.68 370.50h1v2h-1zM1192.68 380.50h1v2h-1zM1192.68 390.50h1v2h-1zM1192.68 400.50h1v2h-1zM1192.68 410.50h1v2h-1zM1192.68 420.50h1v2h-1zM1192.68 430.50h1v2h-1zM1192.68 440.50h1v2h-1zM1192.68 450.50h1v2h-1zM1192.68 460.50h1v2h-1zM1192.68 470.50h1v2h-1zM1192.68 480.50h1v2h-1zM1192.68 490.50h1v2h-1zM1192.68 500.50h1v2h-1zM1317.59 310.50h1v2h-1zM1317.59 320.50h1v2h-1zM1317.59 330.50h1v2h-1zM1317.59 340.50h1v2h-1zM1317.59 350.50h1v2h-1zM1317.59 360.50h1v2h-1zM1317.59 370.50h1v2h-1zM1317.59 380.50h1v2h-1zM1317.59 390.50h1v2h-1zM1317.59 400.50h1v2h-1zM1317.59 410.50h1v2h-1zM1317.59 420.50h1v2h-1zM1317.59 430.50h1v2h-1zM1317.59 440.50h1v2h-1zM1317.59 450.50h1v2h-1zM1317.59 460.50h1v2h-1zM1317.59 470.50h1v2h-1zM1317.59 480.50h1v2h-1zM1317.59 490.50h1v2h-1zM1317.59 500.50h1v2h-1z" fill="#e4e4e4"/>
<path d="M69.00 510.00h2v1.00h-2zM79.00 510.00h2v1.00h-2zM89.00 510.00h2v1.00h-2zM99.00 510.00h2v1.00h-2zM109.00 510.00h2v1.00h-2zM119.00 510.00h2v1.00h-2zM129.00 510.00h2v1.00h-2zM139.00 510.00h2v1.00h-2zM149.00 510.00h2v1.00h-2zM159.00 510.00h2v1.00h-2zM169.00 510.00h2v1.00h-2zM179.00 510.00h2v1.00h-2zM189.00 510.00h2v1.00h-2zM199.00 510.00h2v1.00h-2zM209.00 510.00h2v1.00h-2zM219.00 510.00h2v1.00h-2zM229.00 510.00h2v1.00h-2zM239.00 510.00h2v1.00h-2zM249.00 510.00h2v1.00h-2zM259.00 510.00h2v1.00h-2zM269.00 510.00h2v1.00h-2zM279.00 510.00h2v1.00h-2zM289.00 510.00h2v1.00h-2zM299.00 510.00h2v1.00h-2zM309.00 510.00h2v1.00h-2zM319.00 510.00h2v1.00h-2zM329.00 510.00h2v1.00h-2zM339.00 510.00h2v1.00h-2zM349.00 510.00h2v1.00h-2zM359.00 510.00h2v1.00h-2zM369.00 510.00h2v1.00h-2zM379.00 510.00h2v1.00h-2zM389.00 510.00h2v1.00h-2zM399.00 510.00h2v1.00h-2zM409.00 510.00h2v1.00h-2zM419.00 510.00h2v1.00h-2zM429.00 510.00h2v1.00h-2zM439.00 510.00h2v1.00h-2zM449.00 510.00h2v1.00h-2zM459.00 510.00h2v1.00h-2zM469.00 510.00h2v1.00h-2zM479.00 510.00h2v1.00h-2zM489.00 510.00h2v1.00h-2zM499.00 510.00h2v1.00h-2zM509.00 510.00h2v1.00h-2zM519.00 510.00h2v1.00h-2zM529.00 510.00h2v1.00h-2zM539.00 510.00h2v1.00h-2zM549.00 510.00h2v1.00h-2zM559.00 510.00h2v1.00h-2zM569.00 510.00h2v1.00h-2zM579.00 510.00h2v1.00h-2zM589.00 510.00h2v1.00h-2zM599.00 510.00h2v1.00h-2zM609.00 510.00h2v1.00h-2zM619.00 510.00h2v1.00h-2zM629.00 510.00h2v1.00h-2zM639.00 510.00h2v1.00h-2zM649.00 510.00h2v1.00h-2zM659.00 510.00h2v1.00h-2zM669.00 510.00h2v1.00h-2zM679.00 510.00h2v1.00h-2zM689.00 510.00h2v1.00h-2zM699.00 510.00h2v1.00h-2zM709.00 510.00h2v1.00h-2zM719.00 510.00h2v1.00h-2zM729.00 510.00h2v1.00h-2zM739.00 510.00h2v1.00h-2zM749.00 510.00h2v1.00h-2zM759.00 510.00h2v1.00h-2zM769.00 510.00h2v1.00h-2zM779.00 510.00h2v1.00h-2zM789.00 510.00h2v1.00h-2zM799.00 510.00h2v1.00h-2zM809.00 510.00h2v1.00h-2zM819.00 510.00h2v1.00h-2zM829.00 510.00h2v1.00h-2zM839.00 510.00h2v1.00h-2zM849.00 510.00h2v1.00h-2zM859.00 510.00h2v1.00h-2zM869.00 510.00h2v1.00h-2zM879.00 510.00h2v1.00h-2zM889.00 510.00h2v1.00h-2zM899.00 510.00h2v1.00h-2zM909.00 510.00h2v1.00h-2zM919.00 510.00h2v1.00h-2zM929.00 510.00h2v1.00h-2zM939.00 510.00h2v1.00h-2zM949.00 510.00h2v1.00h-2zM959.00 510.00h2v1.00h-2zM969.00 510.00h2v1.00h-2zM979.00 510.00h2v1.00h-2zM989.00 510.00h2v1.00h-2zM999.00 510.00h2v1.00h-2zM1009.00 510.00h2v1.00h-2zM1019.00 510.00h2v1.00h-2zM1029.00 510.00h2v1.00h-2zM1039.00 510.00h2v1.00h-2zM1049.00 510.00h2v1.00h-2zM1059.00 510.00h2v1.00h-2zM1069.00 510.00h2v1.00h-2zM1079.00 510.00h2v1.00h-2zM1089.00 510.00h2v1.00h-2zM1099.00 510.00h2v1.00h-2zM1109.00 510.00h2v1.00h-2zM1119.00 510.00h2v1.00h-2zM1129.00 510.00h2v1.00h-2zM1139.00 510.00h2v1.00h-2zM1149.00 510.00h2v1.00h-2zM1159.00 510.00h2v1.00h-2zM1169.00 510.00h2v1.00h-2zM1179.00 510.00h2v1.00h-2zM1189.00 510.00h2v1.00h-2zM1199.00 510.00h2v1.00h-2zM1209.00 510.00h2v1.00h-2zM1219.00 510.00h2v1.00h-2zM1229.00 510.00h2v1.00h-2zM1239.00 510.00h2v1.00h-2zM1249.00 510.00h2v1.00h-2zM1259.00 510.00h2v1.00h-2zM1269.00 510.00h2v1.00h-2zM1279.00 510.00h2v1.00h-2zM1289.00 510.00h2v1.00h-2zM1299.00 510.00h2v1.00h-2zM1309.00 510.00h2v1.00h-2zM1319.00 510.00h2v1.00h-2zM1329.00 510.00h2v1.00h-2zM1339.00 510.00h2v1.00h-2zM1349.00 510.00h2v1.00h-2zM1359.00 510.00h2v1.00h-2zM1369.00 510.00h2v1.00h-2zM1379.00 510.00h2v1.00h-2zM1389.00 510.00h2v1.00h-2zM1399.00 510.00h2v1.00h-2zM1409.00 510.00h2v1.00h-2zM1419.00 510.00h2v1.00h-2zM1429.00 510.00h2v1.00h-2zM1439.00 510.00h2v1.00h-2z" fill="#eeeeee"/>
<path d="M1442.00 310.50h2.00v2h-2.00zM1442.00 320.50h2.00v2h-2.00zM1442.00 330.50h2.00v2h-2.00zM1442.00 340.50h2.00v2h-2.00zM1442.00 350.50h2.00v2h-2.00zM1442.00 360.50h2.00v2h-2.00zM1442.00 370.50h2.00v2h-2.00zM1442.00 380.50h2.00v2h-2.00zM1442.00 390.50h2.00v2h-2.00zM1442.00 400.50h2.00v2h-2.00zM1442.00 410.50h2.00v2h-2.00zM1442.00 420.50h2.00v2h-2.00zM1442.00 430.50h2.00v2h-2.00zM1442.00 440.50h2.00v2h-2.00zM1442.00 450.50h2.00v2h-2.00zM1442.00 460.50h2.00v2h-2.00zM1442.00 470.50h2.00v2h-2.00zM1442.00 480.50h2.00v2h-2.00zM1442.00 490.50h2.00v2h-2.00zM1442.00 500.50h2.00v2h-2.00z" fill="#d0d0d0"/>
<path d="M193.91 460.50 L225.14 360.50 L256.36 460.50 L287.59 360.50 L318.82 460.50 L350.05 360.50 L381.27 460.50 L412.50 360.50 L443.73 460.50 L474.95 360.50 L506.18 460.50 L537.41 360.50 L568.64 460.50 L599.86 360.50 L631.09 460.50 L662.32 360.50 L693.55 460.50 L724.77 360.50 L756.00 460.50 L787.23 360.50 L818.45 460.50 L849.68 360.50 L880.91 460.50 L912.14 360.50 L943.36 460.50 L974.59 360.50 L1005.82 460.50 L1037.05 360.50 L1068.27 460.50 L1099.50 360.50 L1130.73 460.50 L1161.95 360.50 L1193.18 460.50 L1224.41 360.50 L1255.64 460.50 L1286.86 360.50 L1318.09 460.50 L1328.71 426.50" fill="none" stroke="#ffff00" stroke-width="1.3" stroke-opacity="0.9" stroke-linejoin="round" stroke-linecap="round"/>
<text x="19" y="290" fill="#ffff00" stroke="#ffff00" letter-spacing="0.35">V(pulse4)</text>
<text x="64.00" y="310.00" fill="#ffffff" stroke="#ffffff" text-anchor="end" letter-spacing="0.00">1.5V</text>
<text x="64.00" y="360.50" fill="#ffffff" stroke="#ffffff" text-anchor="end" letter-spacing="0.00">1V</text>
<text x="64.75" y="410.50" fill="#ffffff" stroke="#ffffff" text-anchor="end" letter-spacing="0.75">500mV</text>
<text x="64.00" y="460.50" fill="#ffffff" stroke="#ffffff" text-anchor="end" letter-spacing="0.00">0V</text>
<text x="64.90" y="510.00" fill="#ffffff" stroke="#ffffff" text-anchor="end" letter-spacing="0.90">-500mV</text>
<text x="69.22" y="528" fill="#ffffff" stroke="#ffffff" text-anchor="middle" letter-spacing="0.45">-2ms</text>
<text x="193.91" y="528" fill="#ffffff" stroke="#ffffff" text-anchor="middle" letter-spacing="0.00">0s</text>
<text x="319.04" y="528" fill="#ffffff" stroke="#ffffff" text-anchor="middle" letter-spacing="0.45">2ms</text>
<text x="443.95" y="528" fill="#ffffff" stroke="#ffffff" text-anchor="middle" letter-spacing="0.45">4ms</text>
<text x="568.86" y="528" fill="#ffffff" stroke="#ffffff" text-anchor="middle" letter-spacing="0.45">6ms</text>
<text x="693.77" y="528" fill="#ffffff" stroke="#ffffff" text-anchor="middle" letter-spacing="0.45">8ms</text>
<text x="818.68" y="528" fill="#ffffff" stroke="#ffffff" text-anchor="middle" letter-spacing="0.45">10ms</text>
<text x="943.59" y="528" fill="#ffffff" stroke="#ffffff" text-anchor="middle" letter-spacing="0.45">12ms</text>
<text x="1068.50" y="528" fill="#ffffff" stroke="#ffffff" text-anchor="middle" letter-spacing="0.45">14ms</text>
<text x="1193.41" y="528" fill="#ffffff" stroke="#ffffff" text-anchor="middle" letter-spacing="0.45">16ms</text>
<text x="1318.32" y="528" fill="#ffffff" stroke="#ffffff" text-anchor="middle" letter-spacing="0.45">18ms</text>
<text x="1443.22" y="528" fill="#ffffff" stroke="#ffffff" text-anchor="middle" letter-spacing="0.45">20ms</text>
<rect x="69.00" y="575.50" width="1374.00" height="200.50" fill="#333333"/>
<rect x="68.00" y="575.50" width="2" height="200.50" fill="#9c9c9c"/>
<rect x="1442.00" y="575.50" width="2" height="200.50" fill="#9c9c9c"/>
<rect x="68.00" y="575.00" width="1376.00" height="1" fill="#d0d0d0"/>
<rect x="68.00" y="775.00" width="1376.00" height="2" fill="#9c9c9c"/>
<path d="M69.00 625.12h2v1h-2zM79.00 625.12h2v1h-2zM89.00 625.12h2v1h-2zM99.00 625.12h2v1h-2zM109.00 625.12h2v1h-2zM119.00 625.12h2v1h-2zM129.00 625.12h2v1h-2zM139.00 625.12h2v1h-2zM149.00 625.12h2v1h-2zM159.00 625.12h2v1h-2zM169.00 625.12h2v1h-2zM179.00 625.12h2v1h-2zM189.00 625.12h2v1h-2zM199.00 625.12h2v1h-2zM209.00 625.12h2v1h-2zM219.00 625.12h2v1h-2zM229.00 625.12h2v1h-2zM239.00 625.12h2v1h-2zM249.00 625.12h2v1h-2zM259.00 625.12h2v1h-2zM269.00 625.12h2v1h-2zM279.00 625.12h2v1h-2zM289.00 625.12h2v1h-2zM299.00 625.12h2v1h-2zM309.00 625.12h2v1h-2zM319.00 625.12h2v1h-2zM329.00 625.12h2v1h-2zM339.00 625.12h2v1h-2zM349.00 625.12h2v1h-2zM359.00 625.12h2v1h-2zM369.00 625.12h2v1h-2zM379.00 625.12h2v1h-2zM389.00 625.12h2v1h-2zM399.00 625.12h2v1h-2zM409.00 625.12h2v1h-2zM419.00 625.12h2v1h-2zM429.00 625.12h2v1h-2zM439.00 625.12h2v1h-2zM449.00 625.12h2v1h-2zM459.00 625.12h2v1h-2zM469.00 625.12h2v1h-2zM479.00 625.12h2v1h-2zM489.00 625.12h2v1h-2zM499.00 625.12h2v1h-2zM509.00 625.12h2v1h-2zM519.00 625.12h2v1h-2zM529.00 625.12h2v1h-2zM539.00 625.12h2v1h-2zM549.00 625.12h2v1h-2zM559.00 625.12h2v1h-2zM569.00 625.12h2v1h-2zM579.00 625.12h2v1h-2zM589.00 625.12h2v1h-2zM599.00 625.12h2v1h-2zM609.00 625.12h2v1h-2zM619.00 625.12h2v1h-2zM629.00 625.12h2v1h-2zM639.00 625.12h2v1h-2zM649.00 625.12h2v1h-2zM659.00 625.12h2v1h-2zM669.00 625.12h2v1h-2zM679.00 625.12h2v1h-2zM689.00 625.12h2v1h-2zM699.00 625.12h2v1h-2zM709.00 625.12h2v1h-2zM719.00 625.12h2v1h-2zM729.00 625.12h2v1h-2zM739.00 625.12h2v1h-2zM749.00 625.12h2v1h-2zM759.00 625.12h2v1h-2zM769.00 625.12h2v1h-2zM779.00 625.12h2v1h-2zM789.00 625.12h2v1h-2zM799.00 625.12h2v1h-2zM809.00 625.12h2v1h-2zM819.00 625.12h2v1h-2zM829.00 625.12h2v1h-2zM839.00 625.12h2v1h-2zM849.00 625.12h2v1h-2zM859.00 625.12h2v1h-2zM869.00 625.12h2v1h-2zM879.00 625.12h2v1h-2zM889.00 625.12h2v1h-2zM899.00 625.12h2v1h-2zM909.00 625.12h2v1h-2zM919.00 625.12h2v1h-2zM929.00 625.12h2v1h-2zM939.00 625.12h2v1h-2zM949.00 625.12h2v1h-2zM959.00 625.12h2v1h-2zM969.00 625.12h2v1h-2zM979.00 625.12h2v1h-2zM989.00 625.12h2v1h-2zM999.00 625.12h2v1h-2zM1009.00 625.12h2v1h-2zM1019.00 625.12h2v1h-2zM1029.00 625.12h2v1h-2zM1039.00 625.12h2v1h-2zM1049.00 625.12h2v1h-2zM1059.00 625.12h2v1h-2zM1069.00 625.12h2v1h-2zM1079.00 625.12h2v1h-2zM1089.00 625.12h2v1h-2zM1099.00 625.12h2v1h-2zM1109.00 625.12h2v1h-2zM1119.00 625.12h2v1h-2zM1129.00 625.12h2v1h-2zM1139.00 625.12h2v1h-2zM1149.00 625.12h2v1h-2zM1159.00 625.12h2v1h-2zM1169.00 625.12h2v1h-2zM1179.00 625.12h2v1h-2zM1189.00 625.12h2v1h-2zM1199.00 625.12h2v1h-2zM1209.00 625.12h2v1h-2zM1219.00 625.12h2v1h-2zM1229.00 625.12h2v1h-2zM1239.00 625.12h2v1h-2zM1249.00 625.12h2v1h-2zM1259.00 625.12h2v1h-2zM1269.00 625.12h2v1h-2zM1279.00 625.12h2v1h-2zM1289.00 625.12h2v1h-2zM1299.00 625.12h2v1h-2zM1309.00 625.12h2v1h-2zM1319.00 625.12h2v1h-2zM1329.00 625.12h2v1h-2zM1339.00 625.12h2v1h-2zM1349.00 625.12h2v1h-2zM1359.00 625.12h2v1h-2zM1369.00 625.12h2v1h-2zM1379.00 625.12h2v1h-2zM1389.00 625.12h2v1h-2zM1399.00 625.12h2v1h-2zM1409.00 625.12h2v1h-2zM1419.00 625.12h2v1h-2zM1429.00 625.12h2v1h-2zM1439.00 625.12h2v1h-2zM69.00 675.25h2v1h-2zM79.00 675.25h2v1h-2zM89.00 675.25h2v1h-2zM99.00 675.25h2v1h-2zM109.00 675.25h2v1h-2zM119.00 675.25h2v1h-2zM129.00 675.25h2v1h-2zM139.00 675.25h2v1h-2zM149.00 675.25h2v1h-2zM159.00 675.25h2v1h-2zM169.00 675.25h2v1h-2zM179.00 675.25h2v1h-2zM189.00 675.25h2v1h-2zM199.00 675.25h2v1h-2zM209.00 675.25h2v1h-2zM219.00 675.25h2v1h-2zM229.00 675.25h2v1h-2zM239.00 675.25h2v1h-2zM249.00 675.25h2v1h-2zM259.00 675.25h2v1h-2zM269.00 675.25h2v1h-2zM279.00 675.25h2v1h-2zM289.00 675.25h2v1h-2zM299.00 675.25h2v1h-2zM309.00 675.25h2v1h-2zM319.00 675.25h2v1h-2zM329.00 675.25h2v1h-2zM339.00 675.25h2v1h-2zM349.00 675.25h2v1h-2zM359.00 675.25h2v1h-2zM369.00 675.25h2v1h-2zM379.00 675.25h2v1h-2zM389.00 675.25h2v1h-2zM399.00 675.25h2v1h-2zM409.00 675.25h2v1h-2zM419.00 675.25h2v1h-2zM429.00 675.25h2v1h-2zM439.00 675.25h2v1h-2zM449.00 675.25h2v1h-2zM459.00 675.25h2v1h-2zM469.00 675.25h2v1h-2zM479.00 675.25h2v1h-2zM489.00 675.25h2v1h-2zM499.00 675.25h2v1h-2zM509.00 675.25h2v1h-2zM519.00 675.25h2v1h-2zM529.00 675.25h2v1h-2zM539.00 675.25h2v1h-2zM549.00 675.25h2v1h-2zM559.00 675.25h2v1h-2zM569.00 675.25h2v1h-2zM579.00 675.25h2v1h-2zM589.00 675.25h2v1h-2zM599.00 675.25h2v1h-2zM609.00 675.25h2v1h-2zM619.00 675.25h2v1h-2zM629.00 675.25h2v1h-2zM639.00 675.25h2v1h-2zM649.00 675.25h2v1h-2zM659.00 675.25h2v1h-2zM669.00 675.25h2v1h-2zM679.00 675.25h2v1h-2zM689.00 675.25h2v1h-2zM699.00 675.25h2v1h-2zM709.00 675.25h2v1h-2zM719.00 675.25h2v1h-2zM729.00 675.25h2v1h-2zM739.00 675.25h2v1h-2zM749.00 675.25h2v1h-2zM759.00 675.25h2v1h-2zM769.00 675.25h2v1h-2zM779.00 675.25h2v1h-2zM789.00 675.25h2v1h-2zM799.00 675.25h2v1h-2zM809.00 675.25h2v1h-2zM819.00 675.25h2v1h-2zM829.00 675.25h2v1h-2zM839.00 675.25h2v1h-2zM849.00 675.25h2v1h-2zM859.00 675.25h2v1h-2zM869.00 675.25h2v1h-2zM879.00 675.25h2v1h-2zM889.00 675.25h2v1h-2zM899.00 675.25h2v1h-2zM909.00 675.25h2v1h-2zM919.00 675.25h2v1h-2zM929.00 675.25h2v1h-2zM939.00 675.25h2v1h-2zM949.00 675.25h2v1h-2zM959.00 675.25h2v1h-2zM969.00 675.25h2v1h-2zM979.00 675.25h2v1h-2zM989.00 675.25h2v1h-2zM999.00 675.25h2v1h-2zM1009.00 675.25h2v1h-2zM1019.00 675.25h2v1h-2zM1029.00 675.25h2v1h-2zM1039.00 675.25h2v1h-2zM1049.00 675.25h2v1h-2zM1059.00 675.25h2v1h-2zM1069.00 675.25h2v1h-2zM1079.00 675.25h2v1h-2zM1089.00 675.25h2v1h-2zM1099.00 675.25h2v1h-2zM1109.00 675.25h2v1h-2zM1119.00 675.25h2v1h-2zM1129.00 675.25h2v1h-2zM1139.00 675.25h2v1h-2zM1149.00 675.25h2v1h-2zM1159.00 675.25h2v1h-2zM1169.00 675.25h2v1h-2zM1179.00 675.25h2v1h-2zM1189.00 675.25h2v1h-2zM1199.00 675.25h2v1h-2zM1209.00 675.25h2v1h-2zM1219.00 675.25h2v1h-2zM1229.00 675.25h2v1h-2zM1239.00 675.25h2v1h-2zM1249.00 675.25h2v1h-2zM1259.00 675.25h2v1h-2zM1269.00 675.25h2v1h-2zM1279.00 675.25h2v1h-2zM1289.00 675.25h2v1h-2zM1299.00 675.25h2v1h-2zM1309.00 675.25h2v1h-2zM1319.00 675.25h2v1h-2zM1329.00 675.25h2v1h-2zM1339.00 675.25h2v1h-2zM1349.00 675.25h2v1h-2zM1359.00 675.25h2v1h-2zM1369.00 675.25h2v1h-2zM1379.00 675.25h2v1h-2zM1389.00 675.25h2v1h-2zM1399.00 675.25h2v1h-2zM1409.00 675.25h2v1h-2zM1419.00 675.25h2v1h-2zM1429.00 675.25h2v1h-2zM1439.00 675.25h2v1h-2zM69.00 725.38h2v1h-2zM79.00 725.38h2v1h-2zM89.00 725.38h2v1h-2zM99.00 725.38h2v1h-2zM109.00 725.38h2v1h-2zM119.00 725.38h2v1h-2zM129.00 725.38h2v1h-2zM139.00 725.38h2v1h-2zM149.00 725.38h2v1h-2zM159.00 725.38h2v1h-2zM169.00 725.38h2v1h-2zM179.00 725.38h2v1h-2zM189.00 725.38h2v1h-2zM199.00 725.38h2v1h-2zM209.00 725.38h2v1h-2zM219.00 725.38h2v1h-2zM229.00 725.38h2v1h-2zM239.00 725.38h2v1h-2zM249.00 725.38h2v1h-2zM259.00 725.38h2v1h-2zM269.00 725.38h2v1h-2zM279.00 725.38h2v1h-2zM289.00 725.38h2v1h-2zM299.00 725.38h2v1h-2zM309.00 725.38h2v1h-2zM319.00 725.38h2v1h-2zM329.00 725.38h2v1h-2zM339.00 725.38h2v1h-2zM349.00 725.38h2v1h-2zM359.00 725.38h2v1h-2zM369.00 725.38h2v1h-2zM379.00 725.38h2v1h-2zM389.00 725.38h2v1h-2zM399.00 725.38h2v1h-2zM409.00 725.38h2v1h-2zM419.00 725.38h2v1h-2zM429.00 725.38h2v1h-2zM439.00 725.38h2v1h-2zM449.00 725.38h2v1h-2zM459.00 725.38h2v1h-2zM469.00 725.38h2v1h-2zM479.00 725.38h2v1h-2zM489.00 725.38h2v1h-2zM499.00 725.38h2v1h-2zM509.00 725.38h2v1h-2zM519.00 725.38h2v1h-2zM529.00 725.38h2v1h-2zM539.00 725.38h2v1h-2zM549.00 725.38h2v1h-2zM559.00 725.38h2v1h-2zM569.00 725.38h2v1h-2zM579.00 725.38h2v1h-2zM589.00 725.38h2v1h-2zM599.00 725.38h2v1h-2zM609.00 725.38h2v1h-2zM619.00 725.38h2v1h-2zM629.00 725.38h2v1h-2zM639.00 725.38h2v1h-2zM649.00 725.38h2v1h-2zM659.00 725.38h2v1h-2zM669.00 725.38h2v1h-2zM679.00 725.38h2v1h-2zM689.00 725.38h2v1h-2zM699.00 725.38h2v1h-2zM709.00 725.38h2v1h-2zM719.00 725.38h2v1h-2zM729.00 725.38h2v1h-2zM739.00 725.38h2v1h-2zM749.00 725.38h2v1h-2zM759.00 725.38h2v1h-2zM769.00 725.38h2v1h-2zM779.00 725.38h2v1h-2zM789.00 725.38h2v1h-2zM799.00 725.38h2v1h-2zM809.00 725.38h2v1h-2zM819.00 725.38h2v1h-2zM829.00 725.38h2v1h-2zM839.00 725.38h2v1h-2zM849.00 725.38h2v1h-2zM859.00 725.38h2v1h-2zM869.00 725.38h2v1h-2zM879.00 725.38h2v1h-2zM889.00 725.38h2v1h-2zM899.00 725.38h2v1h-2zM909.00 725.38h2v1h-2zM919.00 725.38h2v1h-2zM929.00 725.38h2v1h-2zM939.00 725.38h2v1h-2zM949.00 725.38h2v1h-2zM959.00 725.38h2v1h-2zM969.00 725.38h2v1h-2zM979.00 725.38h2v1h-2zM989.00 725.38h2v1h-2zM999.00 725.38h2v1h-2zM1009.00 725.38h2v1h-2zM1019.00 725.38h2v1h-2zM1029.00 725.38h2v1h-2zM1039.00 725.38h2v1h-2zM1049.00 725.38h2v1h-2zM1059.00 725.38h2v1h-2zM1069.00 725.38h2v1h-2zM1079.00 725.38h2v1h-2zM1089.00 725.38h2v1h-2zM1099.00 725.38h2v1h-2zM1109.00 725.38h2v1h-2zM1119.00 725.38h2v1h-2zM1129.00 725.38h2v1h-2zM1139.00 725.38h2v1h-2zM1149.00 725.38h2v1h-2zM1159.00 725.38h2v1h-2zM1169.00 725.38h2v1h-2zM1179.00 725.38h2v1h-2zM1189.00 725.38h2v1h-2zM1199.00 725.38h2v1h-2zM1209.00 725.38h2v1h-2zM1219.00 725.38h2v1h-2zM1229.00 725.38h2v1h-2zM1239.00 725.38h2v1h-2zM1249.00 725.38h2v1h-2zM1259.00 725.38h2v1h-2zM1269.00 725.38h2v1h-2zM1279.00 725.38h2v1h-2zM1289.00 725.38h2v1h-2zM1299.00 725.38h2v1h-2zM1309.00 725.38h2v1h-2zM1319.00 725.38h2v1h-2zM1329.00 725.38h2v1h-2zM1339.00 725.38h2v1h-2zM1349.00 725.38h2v1h-2zM1359.00 725.38h2v1h-2zM1369.00 725.38h2v1h-2zM1379.00 725.38h2v1h-2zM1389.00 725.38h2v1h-2zM1399.00 725.38h2v1h-2zM1409.00 725.38h2v1h-2zM1419.00 725.38h2v1h-2zM1429.00 725.38h2v1h-2zM1439.00 725.38h2v1h-2zM193.41 575.50h1v2h-1zM193.41 585.50h1v2h-1zM193.41 595.50h1v2h-1zM193.41 605.50h1v2h-1zM193.41 615.50h1v2h-1zM193.41 625.50h1v2h-1zM193.41 635.50h1v2h-1zM193.41 645.50h1v2h-1zM193.41 655.50h1v2h-1zM193.41 665.50h1v2h-1zM193.41 675.50h1v2h-1zM193.41 685.50h1v2h-1zM193.41 695.50h1v2h-1zM193.41 705.50h1v2h-1zM193.41 715.50h1v2h-1zM193.41 725.50h1v2h-1zM193.41 735.50h1v2h-1zM193.41 745.50h1v2h-1zM193.41 755.50h1v2h-1zM193.41 765.50h1v2h-1zM318.32 575.50h1v2h-1zM318.32 585.50h1v2h-1zM318.32 595.50h1v2h-1zM318.32 605.50h1v2h-1zM318.32 615.50h1v2h-1zM318.32 625.50h1v2h-1zM318.32 635.50h1v2h-1zM318.32 645.50h1v2h-1zM318.32 655.50h1v2h-1zM318.32 665.50h1v2h-1zM318.32 675.50h1v2h-1zM318.32 685.50h1v2h-1zM318.32 695.50h1v2h-1zM318.32 705.50h1v2h-1zM318.32 715.50h1v2h-1zM318.32 725.50h1v2h-1zM318.32 735.50h1v2h-1zM318.32 745.50h1v2h-1zM318.32 755.50h1v2h-1zM318.32 765.50h1v2h-1zM443.23 575.50h1v2h-1zM443.23 585.50h1v2h-1zM443.23 595.50h1v2h-1zM443.23 605.50h1v2h-1zM443.23 615.50h1v2h-1zM443.23 625.50h1v2h-1zM443.23 635.50h1v2h-1zM443.23 645.50h1v2h-1zM443.23 655.50h1v2h-1zM443.23 665.50h1v2h-1zM443.23 675.50h1v2h-1zM443.23 685.50h1v2h-1zM443.23 695.50h1v2h-1zM443.23 705.50h1v2h-1zM443.23 715.50h1v2h-1zM443.23 725.50h1v2h-1zM443.23 735.50h1v2h-1zM443.23 745.50h1v2h-1zM443.23 755.50h1v2h-1zM443.23 765.50h1v2h-1zM568.14 575.50h1v2h-1zM568.14 585.50h1v2h-1zM568.14 595.50h1v2h-1zM568.14 605.50h1v2h-1zM568.14 615.50h1v2h-1zM568.14 625.50h1v2h-1zM568.14 635.50h1v2h-1zM568.14 645.50h1v2h-1zM568.14 655.50h1v2h-1zM568.14 665.50h1v2h-1zM568.14 675.50h1v2h-1zM568.14 685.50h1v2h-1zM568.14 695.50h1v2h-1zM568.14 705.50h1v2h-1zM568.14 715.50h1v2h-1zM568.14 725.50h1v2h-1zM568.14 735.50h1v2h-1zM568.14 745.50h1v2h-1zM568.14 755.50h1v2h-1zM568.14 765.50h1v2h-1zM693.05 575.50h1v2h-1zM693.05 585.50h1v2h-1zM693.05 595.50h1v2h-1zM693.05 605.50h1v2h-1zM693.05 615.50h1v2h-1zM693.05 625.50h1v2h-1zM693.05 635.50h1v2h-1zM693.05 645.50h1v2h-1zM693.05 655.50h1v2h-1zM693.05 665.50h1v2h-1zM693.05 675.50h1v2h-1zM693.05 685.50h1v2h-1zM693.05 695.50h1v2h-1zM693.05 705.50h1v2h-1zM693.05 715.50h1v2h-1zM693.05 725.50h1v2h-1zM693.05 735.50h1v2h-1zM693.05 745.50h1v2h-1zM693.05 755.50h1v2h-1zM693.05 765.50h1v2h-1zM817.95 575.50h1v2h-1zM817.95 585.50h1v2h-1zM817.95 595.50h1v2h-1zM817.95 605.50h1v2h-1zM817.95 615.50h1v2h-1zM817.95 625.50h1v2h-1zM817.95 635.50h1v2h-1zM817.95 645.50h1v2h-1zM817.95 655.50h1v2h-1zM817.95 665.50h1v2h-1zM817.95 675.50h1v2h-1zM817.95 685.50h1v2h-1zM817.95 695.50h1v2h-1zM817.95 705.50h1v2h-1zM817.95 715.50h1v2h-1zM817.95 725.50h1v2h-1zM817.95 735.50h1v2h-1zM817.95 745.50h1v2h-1zM817.95 755.50h1v2h-1zM817.95 765.50h1v2h-1zM942.86 575.50h1v2h-1zM942.86 585.50h1v2h-1zM942.86 595.50h1v2h-1zM942.86 605.50h1v2h-1zM942.86 615.50h1v2h-1zM942.86 625.50h1v2h-1zM942.86 635.50h1v2h-1zM942.86 645.50h1v2h-1zM942.86 655.50h1v2h-1zM942.86 665.50h1v2h-1zM942.86 675.50h1v2h-1zM942.86 685.50h1v2h-1zM942.86 695.50h1v2h-1zM942.86 705.50h1v2h-1zM942.86 715.50h1v2h-1zM942.86 725.50h1v2h-1zM942.86 735.50h1v2h-1zM942.86 745.50h1v2h-1zM942.86 755.50h1v2h-1zM942.86 765.50h1v2h-1zM1067.77 575.50h1v2h-1zM1067.77 585.50h1v2h-1zM1067.77 595.50h1v2h-1zM1067.77 605.50h1v2h-1zM1067.77 615.50h1v2h-1zM1067.77 625.50h1v2h-1zM1067.77 635.50h1v2h-1zM1067.77 645.50h1v2h-1zM1067.77 655.50h1v2h-1zM1067.77 665.50h1v2h-1zM1067.77 675.50h1v2h-1zM1067.77 685.50h1v2h-1zM1067.77 695.50h1v2h-1zM1067.77 705.50h1v2h-1zM1067.77 715.50h1v2h-1zM1067.77 725.50h1v2h-1zM1067.77 735.50h1v2h-1zM1067.77 745.50h1v2h-1zM1067.77 755.50h1v2h-1zM1067.77 765.50h1v2h-1zM1192.68 575.50h1v2h-1zM1192.68 585.50h1v2h-1zM1192.68 595.50h1v2h-1zM1192.68 605.50h1v2h-1zM1192.68 615.50h1v2h-1zM1192.68 625.50h1v2h-1zM1192.68 635.50h1v2h-1zM1192.68 645.50h1v2h-1zM1192.68 655.50h1v2h-1zM1192.68 665.50h1v2h-1zM1192.68 675.50h1v2h-1zM1192.68 685.50h1v2h-1zM1192.68 695.50h1v2h-1zM1192.68 705.50h1v2h-1zM1192.68 715.50h1v2h-1zM1192.68 725.50h1v2h-1zM1192.68 735.50h1v2h-1zM1192.68 745.50h1v2h-1zM1192.68 755.50h1v2h-1zM1192.68 765.50h1v2h-1zM1317.59 575.50h1v2h-1zM1317.59 585.50h1v2h-1zM1317.59 595.50h1v2h-1zM1317.59 605.50h1v2h-1zM1317.59 615.50h1v2h-1zM1317.59 625.50h1v2h-1zM1317.59 635.50h1v2h-1zM1317.59 645.50h1v2h-1zM1317.59 655.50h1v2h-1zM1317.59 665.50h1v2h-1zM1317.59 675.50h1v2h-1zM1317.59 685.50h1v2h-1zM1317.59 695.50h1v2h-1zM1317.59 705.50h1v2h-1zM1317.59 715.50h1v2h-1zM1317.59 725.50h1v2h-1zM1317.59 735.50h1v2h-1zM1317.59 745.50h1v2h-1zM1317.59 755.50h1v2h-1zM1317.59 765.50h1v2h-1z" fill="#e4e4e4"/>
<path d="M69.00 775.00h2v2.00h-2zM79.00 775.00h2v2.00h-2zM89.00 775.00h2v2.00h-2zM99.00 775.00h2v2.00h-2zM109.00 775.00h2v2.00h-2zM119.00 775.00h2v2.00h-2zM129.00 775.00h2v2.00h-2zM139.00 775.00h2v2.00h-2zM149.00 775.00h2v2.00h-2zM159.00 775.00h2v2.00h-2zM169.00 775.00h2v2.00h-2zM179.00 775.00h2v2.00h-2zM189.00 775.00h2v2.00h-2zM199.00 775.00h2v2.00h-2zM209.00 775.00h2v2.00h-2zM219.00 775.00h2v2.00h-2zM229.00 775.00h2v2.00h-2zM239.00 775.00h2v2.00h-2zM249.00 775.00h2v2.00h-2zM259.00 775.00h2v2.00h-2zM269.00 775.00h2v2.00h-2zM279.00 775.00h2v2.00h-2zM289.00 775.00h2v2.00h-2zM299.00 775.00h2v2.00h-2zM309.00 775.00h2v2.00h-2zM319.00 775.00h2v2.00h-2zM329.00 775.00h2v2.00h-2zM339.00 775.00h2v2.00h-2zM349.00 775.00h2v2.00h-2zM359.00 775.00h2v2.00h-2zM369.00 775.00h2v2.00h-2zM379.00 775.00h2v2.00h-2zM389.00 775.00h2v2.00h-2zM399.00 775.00h2v2.00h-2zM409.00 775.00h2v2.00h-2zM419.00 775.00h2v2.00h-2zM429.00 775.00h2v2.00h-2zM439.00 775.00h2v2.00h-2zM449.00 775.00h2v2.00h-2zM459.00 775.00h2v2.00h-2zM469.00 775.00h2v2.00h-2zM479.00 775.00h2v2.00h-2zM489.00 775.00h2v2.00h-2zM499.00 775.00h2v2.00h-2zM509.00 775.00h2v2.00h-2zM519.00 775.00h2v2.00h-2zM529.00 775.00h2v2.00h-2zM539.00 775.00h2v2.00h-2zM549.00 775.00h2v2.00h-2zM559.00 775.00h2v2.00h-2zM569.00 775.00h2v2.00h-2zM579.00 775.00h2v2.00h-2zM589.00 775.00h2v2.00h-2zM599.00 775.00h2v2.00h-2zM609.00 775.00h2v2.00h-2zM619.00 775.00h2v2.00h-2zM629.00 775.00h2v2.00h-2zM639.00 775.00h2v2.00h-2zM649.00 775.00h2v2.00h-2zM659.00 775.00h2v2.00h-2zM669.00 775.00h2v2.00h-2zM679.00 775.00h2v2.00h-2zM689.00 775.00h2v2.00h-2zM699.00 775.00h2v2.00h-2zM709.00 775.00h2v2.00h-2zM719.00 775.00h2v2.00h-2zM729.00 775.00h2v2.00h-2zM739.00 775.00h2v2.00h-2zM749.00 775.00h2v2.00h-2zM759.00 775.00h2v2.00h-2zM769.00 775.00h2v2.00h-2zM779.00 775.00h2v2.00h-2zM789.00 775.00h2v2.00h-2zM799.00 775.00h2v2.00h-2zM809.00 775.00h2v2.00h-2zM819.00 775.00h2v2.00h-2zM829.00 775.00h2v2.00h-2zM839.00 775.00h2v2.00h-2zM849.00 775.00h2v2.00h-2zM859.00 775.00h2v2.00h-2zM869.00 775.00h2v2.00h-2zM879.00 775.00h2v2.00h-2zM889.00 775.00h2v2.00h-2zM899.00 775.00h2v2.00h-2zM909.00 775.00h2v2.00h-2zM919.00 775.00h2v2.00h-2zM929.00 775.00h2v2.00h-2zM939.00 775.00h2v2.00h-2zM949.00 775.00h2v2.00h-2zM959.00 775.00h2v2.00h-2zM969.00 775.00h2v2.00h-2zM979.00 775.00h2v2.00h-2zM989.00 775.00h2v2.00h-2zM999.00 775.00h2v2.00h-2zM1009.00 775.00h2v2.00h-2zM1019.00 775.00h2v2.00h-2zM1029.00 775.00h2v2.00h-2zM1039.00 775.00h2v2.00h-2zM1049.00 775.00h2v2.00h-2zM1059.00 775.00h2v2.00h-2zM1069.00 775.00h2v2.00h-2zM1079.00 775.00h2v2.00h-2zM1089.00 775.00h2v2.00h-2zM1099.00 775.00h2v2.00h-2zM1109.00 775.00h2v2.00h-2zM1119.00 775.00h2v2.00h-2zM1129.00 775.00h2v2.00h-2zM1139.00 775.00h2v2.00h-2zM1149.00 775.00h2v2.00h-2zM1159.00 775.00h2v2.00h-2zM1169.00 775.00h2v2.00h-2zM1179.00 775.00h2v2.00h-2zM1189.00 775.00h2v2.00h-2zM1199.00 775.00h2v2.00h-2zM1209.00 775.00h2v2.00h-2zM1219.00 775.00h2v2.00h-2zM1229.00 775.00h2v2.00h-2zM1239.00 775.00h2v2.00h-2zM1249.00 775.00h2v2.00h-2zM1259.00 775.00h2v2.00h-2zM1269.00 775.00h2v2.00h-2zM1279.00 775.00h2v2.00h-2zM1289.00 775.00h2v2.00h-2zM1299.00 775.00h2v2.00h-2zM1309.00 775.00h2v2.00h-2zM1319.00 775.00h2v2.00h-2zM1329.00 775.00h2v2.00h-2zM1339.00 775.00h2v2.00h-2zM1349.00 775.00h2v2.00h-2zM1359.00 775.00h2v2.00h-2zM1369.00 775.00h2v2.00h-2zM1379.00 775.00h2v2.00h-2zM1389.00 775.00h2v2.00h-2zM1399.00 775.00h2v2.00h-2zM1409.00 775.00h2v2.00h-2zM1419.00 775.00h2v2.00h-2zM1429.00 775.00h2v2.00h-2zM1439.00 775.00h2v2.00h-2z" fill="#d0d0d0"/>
<path d="M1442.00 575.50h2.00v2h-2.00zM1442.00 585.50h2.00v2h-2.00zM1442.00 595.50h2.00v2h-2.00zM1442.00 605.50h2.00v2h-2.00zM1442.00 615.50h2.00v2h-2.00zM1442.00 625.50h2.00v2h-2.00zM1442.00 635.50h2.00v2h-2.00zM1442.00 645.50h2.00v2h-2.00zM1442.00 655.50h2.00v2h-2.00zM1442.00 665.50h2.00v2h-2.00zM1442.00 675.50h2.00v2h-2.00zM1442.00 685.50h2.00v2h-2.00zM1442.00 695.50h2.00v2h-2.00zM1442.00 705.50h2.00v2h-2.00zM1442.00 715.50h2.00v2h-2.00zM1442.00 725.50h2.00v2h-2.00zM1442.00 735.50h2.00v2h-2.00zM1442.00 745.50h2.00v2h-2.00zM1442.00 755.50h2.00v2h-2.00zM1442.00 765.50h2.00v2h-2.00z" fill="#d0d0d0"/>
<path d="M193.91 725.88 L256.36 625.62 L256.36 725.88 L318.82 625.62 L318.82 725.88 L381.27 625.62 L381.27 725.88 L443.73 625.62 L443.73 725.88 L506.18 625.62 L506.18 725.88 L568.64 625.62 L568.64 725.88 L631.09 625.62 L631.09 725.88 L693.55 625.62 L693.55 725.88 L756.00 625.62 L756.00 725.88 L818.45 625.62 L818.45 725.88 L880.91 625.62 L880.91 725.88 L943.36 625.62 L943.36 725.88 L1005.82 625.62 L1005.82 725.88 L1068.27 625.62 L1068.27 725.88 L1130.73 625.62 L1130.73 725.88 L1193.18 625.62 L1193.18 725.88 L1255.64 625.62 L1255.64 725.88 L1318.09 625.62 L1318.09 725.88 L1328.71 708.83" fill="none" stroke="#00f400" stroke-width="1.3" stroke-opacity="0.9" stroke-linejoin="round" stroke-linecap="round"/>
<text x="19" y="556" fill="#00f000" stroke="#00f000" letter-spacing="0.35">V(pulse5)</text>
<text x="64.00" y="575.50" fill="#ffffff" stroke="#ffffff" text-anchor="end" letter-spacing="0.00">1.5V</text>
<text x="64.00" y="625.62" fill="#ffffff" stroke="#ffffff" text-anchor="end" letter-spacing="0.00">1V</text>
<text x="64.75" y="675.75" fill="#ffffff" stroke="#ffffff" text-anchor="end" letter-spacing="0.75">500mV</text>
<text x="64.00" y="725.88" fill="#ffffff" stroke="#ffffff" text-anchor="end" letter-spacing="0.00">0V</text>
<text x="64.90" y="776.00" fill="#ffffff" stroke="#ffffff" text-anchor="end" letter-spacing="0.90">-500mV</text>
<text x="69.22" y="793" fill="#ffffff" stroke="#ffffff" text-anchor="middle" letter-spacing="0.45">-2ms</text>
<text x="193.91" y="793" fill="#ffffff" stroke="#ffffff" text-anchor="middle" letter-spacing="0.00">0s</text>
<text x="319.04" y="793" fill="#ffffff" stroke="#ffffff" text-anchor="middle" letter-spacing="0.45">2ms</text>
<text x="443.95" y="793" fill="#ffffff" stroke="#ffffff" text-anchor="middle" letter-spacing="0.45">4ms</text>
<text x="568.86" y="793" fill="#ffffff" stroke="#ffffff" text-anchor="middle" letter-spacing="0.45">6ms</text>
<text x="693.77" y="793" fill="#ffffff" stroke="#ffffff" text-anchor="middle" letter-spacing="0.45">8ms</text>
<text x="818.68" y="793" fill="#ffffff" stroke="#ffffff" text-anchor="middle" letter-spacing="0.45">10ms</text>
<text x="943.59" y="793" fill="#ffffff" stroke="#ffffff" text-anchor="middle" letter-spacing="0.45">12ms</text>
<text x="1068.50" y="793" fill="#ffffff" stroke="#ffffff" text-anchor="middle" letter-spacing="0.45">14ms</text>
<text x="1193.41" y="793" fill="#ffffff" stroke="#ffffff" text-anchor="middle" letter-spacing="0.45">16ms</text>
<text x="1318.32" y="793" fill="#ffffff" stroke="#ffffff" text-anchor="middle" letter-spacing="0.45">18ms</text>
<text x="1443.22" y="793" fill="#ffffff" stroke="#ffffff" text-anchor="middle" letter-spacing="0.45">20ms</text>
</svg></body></html>
